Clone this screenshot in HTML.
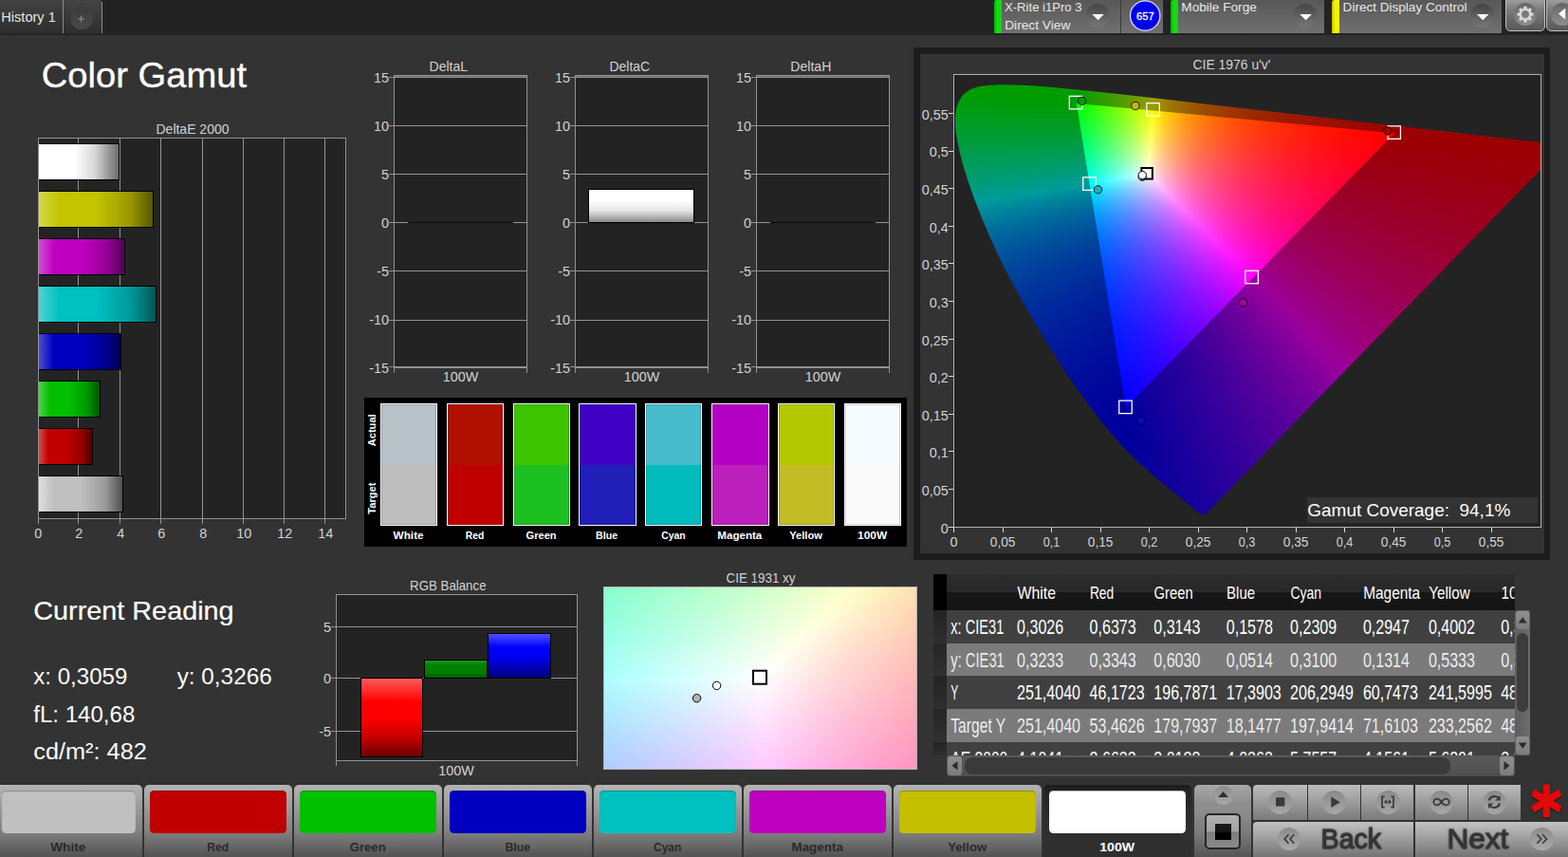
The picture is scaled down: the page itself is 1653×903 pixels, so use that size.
<!DOCTYPE html>
<html lang="en"><head><meta charset="utf-8"><title>Color Gamut</title>
<style>
html,body{margin:0;padding:0;background:#333333;}
#app{position:relative;width:1653px;height:903px;overflow:hidden;background:#333333;font-family:"Liberation Sans",sans-serif;}
#app div{position:absolute;}
#app .r2{height:2px;}
#app .r3{height:3px;left:0;width:100%;}
#app svg.ov{position:absolute;left:0;top:0;font-family:"Liberation Sans",sans-serif;}
</style></head>
<body><div id="app">
<div style="left:0px;top:0px;width:1653px;height:36.5px;background:#232323;"></div>
<div style="left:0px;top:0px;width:66px;height:35px;background:linear-gradient(#424242,#2d2d2d);"></div>
<div style="left:66px;top:0px;width:1px;height:35px;background:#8a8a8a;"></div>
<div style="left:67px;top:0px;width:40.5px;height:35px;background:linear-gradient(#444,#2e2e2e);border-top-right-radius:4px;"></div>
<div style="left:107.2px;top:2px;width:1px;height:33px;background:#8a8a8a;"></div>
<div style="left:73.5px;top:7.4px;width:24px;height:24px;background:linear-gradient(#3a3a3a,#4a4a4a);border-radius:50%;"></div>
<div style="left:1047.9px;top:0px;width:178.3px;height:35px;background:linear-gradient(#585858,#707070);border-top-left-radius:3px;"></div>
<div style="left:1047.9px;top:0px;width:8px;height:35px;background:linear-gradient(90deg,#0aa80a,#10e010 40%,#10d810);border-top-left-radius:3px;"></div>
<div style="left:1181px;top:0px;width:1.2px;height:35px;background:#3a3a3a;"></div>
<div style="left:1144.6px;top:4.2px;width:24.6px;height:24.6px;background:linear-gradient(#444,#787878);border-radius:50%;"></div>
<div style="left:1234px;top:0px;width:161.5px;height:35px;background:linear-gradient(#585858,#707070);border-top-left-radius:3px;"></div>
<div style="left:1234px;top:0px;width:8px;height:35px;background:linear-gradient(90deg,#0aa80a,#10e010 40%,#10d810);border-top-left-radius:3px;"></div>
<div style="left:1363.6px;top:4.2px;width:24.6px;height:24.6px;background:linear-gradient(#444,#787878);border-radius:50%;"></div>
<div style="left:1404px;top:0px;width:179px;height:35px;background:linear-gradient(#585858,#707070);border-top-left-radius:3px;"></div>
<div style="left:1404px;top:0px;width:7.5px;height:35px;background:linear-gradient(90deg,#b8b800,#f4f400 40%,#f0f000);border-top-left-radius:3px;"></div>
<div style="left:1550.2px;top:4.2px;width:24.6px;height:24.6px;background:linear-gradient(#444,#787878);border-radius:50%;"></div>
<div style="left:1587px;top:-4px;width:42px;height:37px;background:linear-gradient(#a6a6a6,#7a7a7a 40%,#585858);border:1px solid #c0c0c0;border-radius:5px;box-sizing:border-box;"></div>
<div style="left:1596px;top:3.4px;width:24px;height:24px;background:linear-gradient(#666,#8e8e8e);border-radius:50%;"></div>
<div style="left:1629.6px;top:-4px;width:42px;height:37px;background:linear-gradient(#a6a6a6,#7a7a7a 40%,#585858);border:1px solid #c0c0c0;border-radius:5px;box-sizing:border-box;"></div>
<div style="left:1634.6px;top:3.4px;width:24px;height:24px;background:linear-gradient(#666,#8e8e8e);border-radius:50%;"></div>
<div style="left:40px;top:145px;width:325px;height:402px;background:#232323;"></div>
<div style="left:82px;top:145px;width:1px;height:407px;background:#929292;"></div>
<div style="left:126px;top:145px;width:1px;height:407px;background:#929292;"></div>
<div style="left:169px;top:145px;width:1px;height:407px;background:#929292;"></div>
<div style="left:213px;top:145px;width:1px;height:407px;background:#929292;"></div>
<div style="left:256px;top:145px;width:1px;height:407px;background:#929292;"></div>
<div style="left:299px;top:145px;width:1px;height:407px;background:#929292;"></div>
<div style="left:342px;top:145px;width:1px;height:407px;background:#929292;"></div>
<div style="left:40px;top:145px;width:325px;height:1px;background:#929292;"></div>
<div style="left:40px;top:546px;width:325px;height:1px;background:#929292;"></div>
<div style="left:40px;top:145px;width:1px;height:402px;background:#929292;"></div>
<div style="left:364px;top:145px;width:1px;height:402px;background:#929292;"></div>
<div style="left:40px;top:547px;width:1px;height:5px;background:#929292;"></div>
<div style="left:41px;top:151px;width:85.2px;height:39px;background:linear-gradient(90deg,#fff,#fff 45%,#d8d8d8 70%,#6c6c6c);border:1px solid #000;border-left:none;border-right-width:1.6px;box-sizing:border-box;"></div>
<div style="left:41px;top:201px;width:121.2px;height:39px;background:linear-gradient(90deg,#d6d64c,#c4c400 18%,#c4c400 50%,#999900 80%,#565600);border:1px solid #000;border-left:none;border-right-width:1.6px;box-sizing:border-box;"></div>
<div style="left:41px;top:251px;width:90.5px;height:39px;background:linear-gradient(90deg,#d34cd3,#c000c0 18%,#c000c0 50%,#960096 80%,#540054);border:1px solid #000;border-left:none;border-right-width:1.6px;box-sizing:border-box;"></div>
<div style="left:41px;top:301px;width:124.3px;height:39px;background:linear-gradient(90deg,#4cd3d3,#00c0c0 18%,#00c0c0 50%,#009696 80%,#005454);border:1px solid #000;border-left:none;border-right-width:1.6px;box-sizing:border-box;"></div>
<div style="left:41px;top:351px;width:87.3px;height:39px;background:linear-gradient(90deg,#4c4cd3,#0000c0 18%,#0000c0 50%,#000096 80%,#000054);border:1px solid #000;border-left:none;border-right-width:1.6px;box-sizing:border-box;"></div>
<div style="left:41px;top:401px;width:65.1px;height:39px;background:linear-gradient(90deg,#4cd34c,#00c000 18%,#00c000 50%,#009600 80%,#005400);border:1px solid #000;border-left:none;border-right-width:1.6px;box-sizing:border-box;"></div>
<div style="left:41px;top:451px;width:57.3px;height:39px;background:linear-gradient(90deg,#d34c4c,#c00000 18%,#c00000 50%,#960000 80%,#540000);border:1px solid #000;border-left:none;border-right-width:1.6px;box-sizing:border-box;"></div>
<div style="left:41px;top:501px;width:89.3px;height:39px;background:linear-gradient(90deg,#dedede,#c0c0c0 18%,#c0c0c0 50%,#999 80%,#505050);border:1px solid #000;border-left:none;border-right-width:1.6px;box-sizing:border-box;"></div>
<div style="left:415px;top:79px;width:141px;height:309px;background:#232323;"></div>
<div style="left:410px;top:81px;width:146px;height:1px;background:#929292;"></div>
<div style="left:410px;top:132px;width:146px;height:1px;background:#929292;"></div>
<div style="left:410px;top:183px;width:146px;height:1px;background:#929292;"></div>
<div style="left:410px;top:234px;width:146px;height:1px;background:#929292;"></div>
<div style="left:410px;top:285px;width:146px;height:1px;background:#929292;"></div>
<div style="left:410px;top:337px;width:146px;height:1px;background:#929292;"></div>
<div style="left:410px;top:386px;width:146px;height:1px;background:#929292;"></div>
<div style="left:415px;top:80px;width:141px;height:1px;background:#6e6e6e;"></div>
<div style="left:415px;top:79px;width:141px;height:1px;background:#929292;"></div>
<div style="left:415px;top:387px;width:141px;height:1px;background:#929292;"></div>
<div style="left:415px;top:79px;width:1px;height:309px;background:#929292;"></div>
<div style="left:555px;top:79px;width:1px;height:309px;background:#929292;"></div>
<div style="left:415px;top:388px;width:1px;height:4.5px;background:#929292;"></div>
<div style="left:555px;top:388px;width:1px;height:4.5px;background:#929292;"></div>
<div style="left:429.5px;top:234px;width:111.5px;height:1px;background:#0c0c0c;"></div>
<div style="left:606px;top:79px;width:141px;height:309px;background:#232323;"></div>
<div style="left:601px;top:81px;width:146px;height:1px;background:#929292;"></div>
<div style="left:601px;top:132px;width:146px;height:1px;background:#929292;"></div>
<div style="left:601px;top:183px;width:146px;height:1px;background:#929292;"></div>
<div style="left:601px;top:234px;width:146px;height:1px;background:#929292;"></div>
<div style="left:601px;top:285px;width:146px;height:1px;background:#929292;"></div>
<div style="left:601px;top:337px;width:146px;height:1px;background:#929292;"></div>
<div style="left:601px;top:386px;width:146px;height:1px;background:#929292;"></div>
<div style="left:606px;top:80px;width:141px;height:1px;background:#6e6e6e;"></div>
<div style="left:606px;top:79px;width:141px;height:1px;background:#929292;"></div>
<div style="left:606px;top:387px;width:141px;height:1px;background:#929292;"></div>
<div style="left:606px;top:79px;width:1px;height:309px;background:#929292;"></div>
<div style="left:746px;top:79px;width:1px;height:309px;background:#929292;"></div>
<div style="left:606px;top:388px;width:1px;height:4.5px;background:#929292;"></div>
<div style="left:746px;top:388px;width:1px;height:4.5px;background:#929292;"></div>
<div style="left:620.3px;top:199.3px;width:112px;height:35.5px;background:linear-gradient(#fff,#fff 35%,#e4e4e4 65%,#8a8a8a);border:1px solid #000;box-sizing:border-box;box-shadow:0 0 0.6px #000;"></div>
<div style="left:797px;top:79px;width:141px;height:309px;background:#232323;"></div>
<div style="left:792px;top:81px;width:146px;height:1px;background:#929292;"></div>
<div style="left:792px;top:132px;width:146px;height:1px;background:#929292;"></div>
<div style="left:792px;top:183px;width:146px;height:1px;background:#929292;"></div>
<div style="left:792px;top:234px;width:146px;height:1px;background:#929292;"></div>
<div style="left:792px;top:285px;width:146px;height:1px;background:#929292;"></div>
<div style="left:792px;top:337px;width:146px;height:1px;background:#929292;"></div>
<div style="left:792px;top:386px;width:146px;height:1px;background:#929292;"></div>
<div style="left:797px;top:80px;width:141px;height:1px;background:#6e6e6e;"></div>
<div style="left:797px;top:79px;width:141px;height:1px;background:#929292;"></div>
<div style="left:797px;top:387px;width:141px;height:1px;background:#929292;"></div>
<div style="left:797px;top:79px;width:1px;height:309px;background:#929292;"></div>
<div style="left:937px;top:79px;width:1px;height:309px;background:#929292;"></div>
<div style="left:797px;top:388px;width:1px;height:4.5px;background:#929292;"></div>
<div style="left:937px;top:388px;width:1px;height:4.5px;background:#929292;"></div>
<div style="left:811.5px;top:234px;width:111.5px;height:1px;background:#0c0c0c;"></div>
<div style="left:384px;top:418.5px;width:572px;height:157px;background:#000;"></div>
<div style="left:401px;top:425px;width:60.2px;height:129px;background:linear-gradient(#b8c0c8,#b8c0c8 50.4%,#bebebe 50.4%,#bebebe);border:1px solid #fafafa;box-sizing:border-box;box-shadow:inset 0 0 0 1px rgba(0,0,0,.16);"></div>
<div style="left:471px;top:425px;width:60.2px;height:129px;background:linear-gradient(#b01000,#b01000 50.4%,#c00000 50.4%,#c00000);border:1px solid #fafafa;box-sizing:border-box;box-shadow:inset 0 0 0 1px rgba(0,0,0,.16);"></div>
<div style="left:541px;top:425px;width:60.2px;height:129px;background:linear-gradient(#3cc400,#3cc400 50.4%,#1cc020 50.4%,#1cc020);border:1px solid #fafafa;box-sizing:border-box;box-shadow:inset 0 0 0 1px rgba(0,0,0,.16);"></div>
<div style="left:610px;top:425px;width:61px;height:129px;background:linear-gradient(#4000c4,#4000c4 50.4%,#2020b8 50.4%,#2020b8);border:1px solid #fafafa;box-sizing:border-box;box-shadow:inset 0 0 0 1px rgba(0,0,0,.16);"></div>
<div style="left:680.3px;top:425px;width:60.2px;height:129px;background:linear-gradient(#48bccc,#48bccc 50.4%,#00bcbc 50.4%,#00bcbc);border:1px solid #fafafa;box-sizing:border-box;box-shadow:inset 0 0 0 1px rgba(0,0,0,.16);"></div>
<div style="left:750.2px;top:425px;width:61px;height:129px;background:linear-gradient(#b400c4,#b400c4 50.4%,#bc20bc 50.4%,#bc20bc);border:1px solid #fafafa;box-sizing:border-box;box-shadow:inset 0 0 0 1px rgba(0,0,0,.16);"></div>
<div style="left:820px;top:425px;width:60.2px;height:129px;background:linear-gradient(#b4c800,#b4c800 50.4%,#c4bc24 50.4%,#c4bc24);border:1px solid #fafafa;box-sizing:border-box;box-shadow:inset 0 0 0 1px rgba(0,0,0,.16);"></div>
<div style="left:890px;top:425px;width:60.2px;height:129px;background:linear-gradient(#f4fcff,#f4fcff 50.4%,#fafafa 50.4%,#fafafa);border:1px solid #fafafa;box-sizing:border-box;box-shadow:inset 0 0 0 1px rgba(0,0,0,.16);"></div>
<div style="left:354px;top:626px;width:255px;height:176px;background:#232323;"></div>
<div style="left:349px;top:660px;width:260px;height:1px;background:#929292;"></div>
<div style="left:349px;top:714px;width:260px;height:1px;background:#929292;"></div>
<div style="left:349px;top:770px;width:260px;height:1px;background:#929292;"></div>
<div style="left:354px;top:626px;width:255px;height:1px;background:#929292;"></div>
<div style="left:354px;top:801px;width:255px;height:1px;background:#929292;"></div>
<div style="left:354px;top:626px;width:1px;height:176px;background:#929292;"></div>
<div style="left:608px;top:626px;width:1px;height:176px;background:#929292;"></div>
<div style="left:354px;top:802px;width:1px;height:4.5px;background:#929292;"></div>
<div style="left:608px;top:802px;width:1px;height:4.5px;background:#929292;"></div>
<div style="left:379.5px;top:714px;width:66.8px;height:84px;background:linear-gradient(#ff5a5a,#ff0000 30%,#ff0000 50%,#c80000 75%,#6a0000);border:1px solid #000;box-sizing:border-box;"></div>
<div style="left:446.8px;top:695px;width:67.2px;height:20px;background:linear-gradient(#1a981c,#008200 28%,#007c00 70%,#005c00);border:1px solid #000;box-sizing:border-box;"></div>
<div style="left:513.5px;top:667px;width:67.3px;height:48px;background:linear-gradient(#5050ff,#0000ff 30%,#0000f0 55%,#000078);border:1px solid #000;box-sizing:border-box;"></div>
<div style="left:636px;top:618px;width:331px;height:193px;background:#fff;overflow:hidden;"><div class="r3" style="top:0px;background:linear-gradient(90deg,#86ffce 0px,#c1ffcc 136px,#ffffc9 264px,#ffe0af 331px)"></div><div class="r3" style="top:3px;background:linear-gradient(90deg,#87ffd0 0px,#c1ffcd 134px,#ffffcb 261px,#ffdfb0 331px)"></div><div class="r3" style="top:6px;background:linear-gradient(90deg,#88ffd1 0px,#c2ffcf 132px,#ffffcc 258px,#ffddb0 331px)"></div><div class="r3" style="top:9px;background:linear-gradient(90deg,#89ffd2 0px,#c2ffd0 130px,#ffffce 255px,#ffdcb0 331px)"></div><div class="r3" style="top:12px;background:linear-gradient(90deg,#8affd4 0px,#c3ffd2 128px,#ffffcf 252px,#ffdbb0 331px)"></div><div class="r3" style="top:15px;background:linear-gradient(90deg,#8bffd5 0px,#c3ffd3 127px,#ffffd1 248px,#ffd9b1 331px)"></div><div class="r3" style="top:18px;background:linear-gradient(90deg,#8cffd7 0px,#c4ffd5 126px,#ffffd3 245px,#ffd8b1 331px)"></div><div class="r3" style="top:21px;background:linear-gradient(90deg,#8dffd8 0px,#c5ffd6 124px,#ffffd4 242px,#ffd7b1 331px)"></div><div class="r3" style="top:24px;background:linear-gradient(90deg,#8effd9 0px,#c5ffd8 122px,#ffffd6 239px,#ffd5b2 331px)"></div><div class="r3" style="top:27px;background:linear-gradient(90deg,#8fffdb 0px,#c6ffd9 121px,#ffffd7 236px,#ffd4b2 331px)"></div><div class="r3" style="top:30px;background:linear-gradient(90deg,#90ffdc 0px,#c6ffdb 119px,#ffffd9 233px,#ffd3b2 331px)"></div><div class="r3" style="top:33px;background:linear-gradient(90deg,#91ffde 0px,#c7ffdc 117px,#ffffdb 230px,#ffd1b2 331px)"></div><div class="r3" style="top:36px;background:linear-gradient(90deg,#92ffdf 0px,#c7ffde 115px,#ffffdc 227px,#ffd0b3 331px)"></div><div class="r3" style="top:39px;background:linear-gradient(90deg,#94ffe1 0px,#c7ffe0 113px,#ffffde 224px,#ffcfb3 331px)"></div><div class="r3" style="top:42px;background:linear-gradient(90deg,#95ffe2 0px,#c9ffe1 113px,#ffffe0 220px,#ffcdb3 331px)"></div><div class="r3" style="top:45px;background:linear-gradient(90deg,#96ffe4 0px,#c9ffe3 111px,#ffffe1 217px,#ffe4c9 273px,#ffccb3 331px)"></div><div class="r3" style="top:48px;background:linear-gradient(90deg,#97ffe5 0px,#c9ffe4 109px,#ffffe3 214px,#ffe3ca 271px,#ffcbb4 331px)"></div><div class="r3" style="top:51px;background:linear-gradient(90deg,#98ffe7 0px,#caffe6 108px,#ffffe5 211px,#ffe3cb 269px,#ffcab4 331px)"></div><div class="r3" style="top:54px;background:linear-gradient(90deg,#99ffe8 0px,#cbffe8 106px,#ffffe7 208px,#ffe2cc 267px,#ffc8b4 331px)"></div><div class="r3" style="top:57px;background:linear-gradient(90deg,#9affea 0px,#ccffe9 105px,#ffffe8 205px,#ffe2cd 265px,#ffc7b4 331px)"></div><div class="r3" style="top:60px;background:linear-gradient(90deg,#9bffec 0px,#ccffeb 103px,#ffffea 202px,#ffe1ce 263px,#ffc6b5 331px)"></div><div class="r3" style="top:63px;background:linear-gradient(90deg,#9dffed 0px,#ccffed 100px,#ffffec 199px,#ffe0cf 262px,#ffc5b5 331px)"></div><div class="r3" style="top:66px;background:linear-gradient(90deg,#9effef 0px,#ffffed 196px,#ffe0d0 260px,#ffc3b5 331px)"></div><div class="r3" style="top:69px;background:linear-gradient(90deg,#9ffff0 0px,#ffffef 193px,#ffdfd1 258px,#ffc2b5 331px)"></div><div class="r3" style="top:72px;background:linear-gradient(90deg,#a0fff2 0px,#fffff1 189px,#ffded2 257px,#ffc1b6 331px)"></div><div class="r3" style="top:75px;background:linear-gradient(90deg,#a1fff4 0px,#fffff3 186px,#ffddd3 255px,#ffc0b6 331px)"></div><div class="r3" style="top:78px;background:linear-gradient(90deg,#a2fff5 0px,#fffff5 183px,#ffddd4 253px,#ffbeb6 331px)"></div><div class="r3" style="top:81px;background:linear-gradient(90deg,#a4fff7 0px,#fffff6 180px,#ffdcd5 251px,#ffbdb6 331px)"></div><div class="r3" style="top:84px;background:linear-gradient(90deg,#a5fff9 0px,#fffff8 177px,#ffdbd5 250px,#ffbcb7 331px)"></div><div class="r3" style="top:87px;background:linear-gradient(90deg,#a6fffa 0px,#fffffa 174px,#ffdbd6 248px,#ffbbb7 331px)"></div><div class="r3" style="top:90px;background:linear-gradient(90deg,#a7fffc 0px,#fffffc 171px,#ffdad7 246px,#ffb9b7 331px)"></div><div class="r3" style="top:93px;background:linear-gradient(90deg,#a9fffe 0px,#fffffe 168px,#ffdad9 244px,#ffb8b7 331px)"></div><div class="r3" style="top:96px;background:linear-gradient(90deg,#aaffff 0px,#fffeff 166px,#ffd9d9 243px,#ffb7b8 331px)"></div><div class="r3" style="top:99px;background:linear-gradient(90deg,#aafdff 0px,#fffcff 166px,#ffd7d9 243px,#ffb6b8 331px)"></div><div class="r3" style="top:102px;background:linear-gradient(90deg,#aafbff 0px,#fffbff 166px,#ffd5d9 244px,#ffb5b8 331px)"></div><div class="r3" style="top:105px;background:linear-gradient(90deg,#aaf9ff 0px,#fff9ff 167px,#ffd4d9 244px,#ffb3b8 331px)"></div><div class="r3" style="top:108px;background:linear-gradient(90deg,#aaf8ff 0px,#fff7ff 167px,#ffd2da 244px,#ffb2b9 331px)"></div><div class="r3" style="top:111px;background:linear-gradient(90deg,#aaf6ff 0px,#fff5ff 167px,#ffd1da 244px,#ffb1b9 331px)"></div><div class="r3" style="top:114px;background:linear-gradient(90deg,#aaf4ff 0px,#fff3ff 167px,#ffcfda 245px,#ffb0b9 331px)"></div><div class="r3" style="top:117px;background:linear-gradient(90deg,#aaf3ff 0px,#fff2ff 167px,#ffceda 245px,#ffafb9 331px)"></div><div class="r3" style="top:120px;background:linear-gradient(90deg,#aaf1ff 0px,#fff0ff 168px,#ffccda 245px,#ffadba 331px)"></div><div class="r3" style="top:123px;background:linear-gradient(90deg,#abefff 0px,#ffeeff 168px,#ffcbda 245px,#ffacba 331px)"></div><div class="r3" style="top:126px;background:linear-gradient(90deg,#abeeff 0px,#ffecff 168px,#ffcada 245px,#ffabba 331px)"></div><div class="r3" style="top:129px;background:linear-gradient(90deg,#abecff 0px,#ffeaff 168px,#ffc8da 246px,#ffaaba 331px)"></div><div class="r3" style="top:132px;background:linear-gradient(90deg,#abeaff 0px,#ffe9ff 169px,#ffc7db 245px,#ffa9ba 331px)"></div><div class="r3" style="top:135px;background:linear-gradient(90deg,#abe9ff 0px,#ffe7ff 169px,#ffc5db 245px,#ffa8bb 331px)"></div><div class="r3" style="top:138px;background:linear-gradient(90deg,#abe7ff 0px,#ffe5ff 169px,#ffc4db 246px,#ffa6bb 331px)"></div><div class="r3" style="top:141px;background:linear-gradient(90deg,#abe6ff 0px,#ffe4ff 169px,#ffc2db 246px,#ffa5bb 331px)"></div><div class="r3" style="top:144px;background:linear-gradient(90deg,#abe4ff 0px,#ffe2ff 170px,#ffc1db 246px,#ffa4bb 331px)"></div><div class="r3" style="top:147px;background:linear-gradient(90deg,#abe2ff 0px,#ffe0ff 170px,#ffc0db 246px,#ffa3bc 331px)"></div><div class="r3" style="top:150px;background:linear-gradient(90deg,#ace1ff 0px,#ffdeff 170px,#ffbedb 246px,#ffa2bc 331px)"></div><div class="r3" style="top:153px;background:linear-gradient(90deg,#acdfff 0px,#ffddff 170px,#ffbddb 247px,#ffa1bc 331px)"></div><div class="r3" style="top:156px;background:linear-gradient(90deg,#acdeff 0px,#ffdbff 171px,#ffbcdc 246px,#ffa0bc 331px)"></div><div class="r3" style="top:159px;background:linear-gradient(90deg,#acdcff 0px,#ffd9ff 171px,#ffbadc 246px,#ff9fbc 331px)"></div><div class="r3" style="top:162px;background:linear-gradient(90deg,#acdbff 0px,#ffd8ff 171px,#ffb9dc 247px,#ff9dbd 331px)"></div><div class="r3" style="top:165px;background:linear-gradient(90deg,#acd9ff 0px,#ffd6ff 171px,#ffb7dc 247px,#ff9cbd 331px)"></div><div class="r3" style="top:168px;background:linear-gradient(90deg,#acd8ff 0px,#ffd4ff 172px,#ffb6dc 247px,#ff9bbd 331px)"></div><div class="r3" style="top:171px;background:linear-gradient(90deg,#acd6ff 0px,#ffd3ff 172px,#ffb5dc 247px,#ff9abd 331px)"></div><div class="r3" style="top:174px;background:linear-gradient(90deg,#acd5ff 0px,#ffd1ff 172px,#ffb4dc 247px,#ff99be 331px)"></div><div class="r3" style="top:177px;background:linear-gradient(90deg,#acd3ff 0px,#ffd0ff 172px,#ffb2dc 248px,#ff98be 331px)"></div><div class="r3" style="top:180px;background:linear-gradient(90deg,#add2ff 0px,#ffceff 173px,#ffb1dc 248px,#ff97be 331px)"></div><div class="r3" style="top:183px;background:linear-gradient(90deg,#add0ff 0px,#ffccff 173px,#ffafdd 248px,#ff96be 331px)"></div><div class="r3" style="top:186px;background:linear-gradient(90deg,#adcfff 0px,#ffcbff 173px,#ffaedd 248px,#ff95be 331px)"></div><div class="r3" style="top:189px;background:linear-gradient(90deg,#adcdff 0px,#ffc9ff 173px,#ffaddd 248px,#ff94bf 331px)"></div><div class="r3" style="top:192px;background:linear-gradient(90deg,#adccff 0px,#ffc8ff 174px,#ffacdd 248px,#ff92bf 331px)"></div></div>
<div style="left:963px;top:49.5px;width:671px;height:540px;background:#1c1c1c;"></div>
<div style="left:970px;top:56.5px;width:658px;height:526px;background:#333333;"></div>
<div style="left:1006px;top:79px;width:618px;height:476px;background:#232323;"></div>
<div style="left:1006px;top:79px;width:618px;height:476px;background:transparent;overflow:hidden;"><div style="left:0;top:0;width:622px;height:476px;clip-path:polygon(264.06px 463.06px,265.03px 462.8px,642.53px 74.7px,642.55px 74.03px,618.65px 71.14px,197.79px 22.81px,140.2px 16.44px,101.72px 12.67px,81.74px 11.19px,66.37px 10.47px,48.74px 10.32px,37.13px 10.78px,28.92px 11.68px,23.79px 12.75px,21.34px 13.49px,16.69px 15.45px,14.51px 16.69px,12.41px 18.16px,10.49px 19.83px,8.73px 21.72px,7.15px 23.8px,5.7px 26.15px,4.41px 28.76px,3.34px 31.53px,2.46px 34.62px,1.79px 37.93px,1.07px 45.31px,1.19px 53.78px,1.6px 58.53px,3.17px 69.23px,5.76px 81.61px,9.5px 95.74px,14.53px 111.84px,20.92px 129.88px,28.64px 149.65px,37.56px 170.77px,47.74px 192.93px,53.35px 204.3px,59.3px 215.78px,71.88px 238.71px,84.96px 261.26px,98.19px 283.19px,111.33px 304.02px,124.15px 323.23px,136.43px 340.61px,148.12px 356.22px,159.17px 370.13px,169.21px 382.05px,178.03px 391.84px,185.85px 399.9px,196.49px 410.08px,209.16px 421.32px,248.12px 453.86px,255.61px 459.8px,258.11px 461.61px,260.75px 463.13px,261.67px 463.38px,263.17px 463.45px);"><div class="r2" style="top:8px;left:43px;width:25px;background:linear-gradient(90deg,#009c00 0px,#009c00 25px)"></div><div class="r2" style="top:10px;left:23px;width:78px;background:linear-gradient(90deg,#009c00 0px,#009c00 78px)"></div><div class="r2" style="top:12px;left:17px;width:105px;background:linear-gradient(90deg,#009c00 0px,#009c00 105px)"></div><div class="r2" style="top:14px;left:13px;width:129px;background:linear-gradient(90deg,#009c00 0px,#009c00 113px,#179c00 129px)"></div><div class="r2" style="top:16px;left:11px;width:149px;background:linear-gradient(90deg,#009c00 0px,#009c00 115px,#349c00 149px)"></div><div class="r2" style="top:18px;left:8px;width:170px;background:linear-gradient(90deg,#009c00 0px,#009c00 119px,#289c00 145px,#549c00 170px)"></div><div class="r2" style="top:20px;left:7px;width:189px;background:linear-gradient(90deg,#009c02 0px,#009c00 120px,#379c00 155px,#789c00 189px)"></div><div class="r2" style="top:22px;left:5px;width:209px;background:linear-gradient(90deg,#009c05 0px,#009c00 49px,#009c00 123px,#419c00 163px,#6c9c00 185px,#9a9c00 206px,#9c9600 209px)"></div><div class="r2" style="top:24px;left:4px;width:227px;background:linear-gradient(90deg,#009c07 0px,#009c00 71px,#009c00 124px,#239c00 147px,#489c00 168px,#709c00 188px,#9b9c00 207px,#9c7500 227px)"></div><div class="r2" style="top:26px;left:3px;width:246px;background:linear-gradient(90deg,#009c09 0px,#009c00 94px,#009c00 125px,#209c00 146px,#489c00 169px,#709c00 189px,#9b9c00 208px,#9c7800 226px,#9c5d00 246px)"></div><div class="r2" style="top:28px;left:2px;width:264px;background:linear-gradient(90deg,#009c0b 0px,#009c00 127px,#259c00 150px,#4a9c00 171px,#709c00 190px,#9c9b00 209px,#9c8400 220px,#9c6e00 233px,#9c5b00 248px,#9c4b00 264px)"></div><div class="r2" style="top:30px;left:2px;width:282px;background:linear-gradient(90deg,#009c0d 0px,#009c01 127px,#239c00 149px,#489c00 170px,#6e9c00 189px,#9c9b00 209px,#9c7e00 223px,#9c6400 240px,#9c4f00 259px,#9c3d00 282px)"></div><div class="r2" style="top:32px;left:1px;width:300px;background:linear-gradient(90deg,#009c0f 0px,#009c04 128px,#219c01 149px,#489c00 171px,#719c00 191px,#9a9c00 209px,#9c7800 227px,#9c5c00 247px,#9c4500 271px,#9c3200 300px)"></div><div class="r2" style="top:34px;left:1px;width:317px;background:linear-gradient(90deg,#009c11 0px,#019c07 129px,#249c04 151px,#4a9c01 172px,#719c00 191px,#9b9c00 209px,#9c7400 229px,#9c5600 252px,#9c3d00 281px,#9c2900 317px)"></div><div class="r2" style="top:36px;left:0px;width:336px;background:linear-gradient(90deg,#009c14 0px,#009c0a 130px,#239c07 152px,#4a9c05 173px,#719c02 192px,#9b9c00 210px,#9c8400 221px,#9c7100 232px,#9c5000 259px,#9c3600 293px,#9c2100 336px)"></div><div class="r2" style="top:38px;left:0px;width:353px;background:linear-gradient(90deg,#009c16 0px,#009c0d 130px,#219c0a 151px,#489c08 172px,#719c05 192px,#9b9c03 210px,#9c8301 221px,#9c6d00 234px,#9c5b00 248px,#9c4b00 264px,#9c3000 303px,#9c1b00 353px)"></div><div class="r2" style="top:40px;left:0px;width:371px;background:linear-gradient(90deg,#009c18 0px,#019c0f 131px,#239c0d 152px,#479c0b 172px,#6f9c09 191px,#999c06 209px,#9c7f03 223px,#9c6a01 236px,#9c5700 251px,#9c4600 269px,#9c2a00 313px,#9c1500 371px)"></div><div class="r2" style="top:42px;left:0px;width:388px;background:linear-gradient(90deg,#009c1a 0px,#009c12 131px,#229c10 152px,#479c0f 172px,#6f9c0c 191px,#9a9c0a 209px,#9c7e07 223px,#9c6804 237px,#9c5302 254px,#9c4200 273px,#9c3300 296px,#9c2600 322px,#9c1000 388px)"></div><div class="r2" style="top:44px;left:0px;width:406px;background:linear-gradient(90deg,#009c1c 0px,#009c15 131px,#209c14 151px,#459c12 171px,#6b9c10 189px,#9c9a0e 210px,#9c7e0a 223px,#9c6506 239px,#9c5003 257px,#9c3e01 278px,#9c2e00 303px,#9c2100 332px,#9c0c00 406px)"></div><div class="r2" style="top:46px;left:0px;width:423px;background:linear-gradient(90deg,#009c1e 0px,#019c18 132px,#239c17 153px,#479c15 172px,#9c9a11 210px,#9c7c0d 224px,#9c6109 241px,#9c4c05 260px,#9c3a02 283px,#9c2a00 310px,#9c1d00 342px,#9c0900 423px)"></div><div class="r2" style="top:48px;left:0px;width:440px;background:linear-gradient(90deg,#009c21 0px,#009c1b 132px,#239c1a 153px,#499c19 173px,#729c17 192px,#9b9c16 209px,#9c7b10 224px,#9c610b 241px,#9c4a07 262px,#9c3704 286px,#9c2801 315px,#9c1a00 350px,#9c0500 440px)"></div><div class="r2" style="top:50px;left:0px;width:458px;background:linear-gradient(90deg,#009c23 0px,#009c1e 132px,#219c1d 152px,#479c1c 172px,#709c1b 191px,#9c9b19 209px,#9c7b13 224px,#9c5f0e 242px,#9c4809 264px,#9c3505 290px,#9c2502 321px,#9c1700 359px,#9c0200 458px)"></div><div class="r2" style="top:52px;left:0px;width:475px;background:linear-gradient(90deg,#009c25 0px,#019c21 133px,#249c21 154px,#499c20 173px,#6e9c1f 190px,#9c9b1d 209px,#9c7816 225px,#9c5c10 244px,#9c450b 267px,#9c3107 295px,#9c2103 329px,#9c1400 369px,#9c0000 475px)"></div><div class="r2" style="top:54px;left:0px;width:493px;background:linear-gradient(90deg,#009c28 0px,#009c25 133px,#229c24 153px,#479c23 172px,#6b9c23 189px,#9c9a21 209px,#9c7619 226px,#9c5912 246px,#9c420c 270px,#9c2e08 300px,#9c1d04 339px,#9c0f01 386px,#9c0100 462px,#9c0000 493px)"></div><div class="r2" style="top:56px;left:0px;width:510px;background:linear-gradient(90deg,#009c2a 0px,#009c28 133px,#209c27 152px,#449c27 171px,#699c26 188px,#9c9a25 209px,#9c751c 226px,#9c5714 247px,#9c3f0e 273px,#9c2b09 305px,#9c1904 348px,#9c0b01 402px,#9c0000 468px,#9c0000 510px)"></div><div class="r2" style="top:58px;left:0px;width:527px;background:linear-gradient(90deg,#009c2c 0px,#019c2b 134px,#239c2b 154px,#469c2b 172px,#709c2a 191px,#9b9c2a 208px,#9c9929 209px,#9c8423 218px,#9c731f 227px,#9c5516 249px,#9c3c10 276px,#9c280a 310px,#9c1605 358px,#9c0701 419px,#9c0000 467px,#9c0000 527px)"></div><div class="r2" style="top:60px;left:0px;width:545px;background:linear-gradient(90deg,#009c2f 0px,#009c2e 134px,#239c2e 154px,#489c2e 173px,#709c2e 191px,#9c9b2e 208px,#9c8628 217px,#9c7422 226px,#9c5419 249px,#9c3b11 277px,#9c260b 313px,#9c1306 366px,#9c0401 435px,#9c0000 465px,#9c0000 545px)"></div><div class="r2" style="top:62px;left:1px;width:561px;background:linear-gradient(90deg,#009c31 0px,#009c32 133px,#219c32 152px,#469c32 171px,#6e9c32 189px,#9c9b32 207px,#9c852b 216px,#9c7225 226px,#9c511b 250px,#9c3813 280px,#9c230c 317px,#9c1006 375px,#9c0101 452px,#9c0000 561px)"></div><div class="r2" style="top:64px;left:1px;width:579px;background:linear-gradient(90deg,#009c33 0px,#009c35 133px,#1f9c35 151px,#469c36 171px,#6c9c36 188px,#9c9a36 207px,#9c852f 216px,#9c7128 226px,#9c5f22 238px,#9c501d 251px,#9c3614 282px,#9c210d 321px,#9c0e07 381px,#9c0002 459px,#9c0000 579px)"></div><div class="r2" style="top:66px;left:1px;width:596px;background:linear-gradient(90deg,#009c36 0px,#009c38 134px,#229c39 153px,#469c3a 171px,#6a9c3a 187px,#9c9a3b 207px,#9c8433 216px,#9c6f2b 227px,#9c4e1f 252px,#9c3315 285px,#9c1f0e 326px,#9c0d08 383px,#9c0003 457px,#9c0000 596px)"></div><div class="r2" style="top:68px;left:1px;width:614px;background:linear-gradient(90deg,#009c38 0px,#009c3c 134px,#209c3d 152px,#469c3e 171px,#6f9c3f 189px,#9b9c40 206px,#9c993f 207px,#9c8136 217px,#9c6d2e 228px,#9c5c27 240px,#9c4c21 254px,#9c3217 287px,#9c1d0f 330px,#9c0d09 385px,#9c0004 456px,#9c0000 614px)"></div><div class="r2" style="top:70px;left:2px;width:620px;background:linear-gradient(90deg,#009c3b 0px,#009c3f 133px,#1f9c40 151px,#489c42 171px,#719c43 189px,#9b9c44 205px,#9c833a 215px,#9c6e32 226px,#9c5c2a 238px,#9c4c24 252px,#9c3119 286px,#9c1c10 329px,#9c0d0a 383px,#9c0005 453px,#9c0000 620px)"></div><div class="r2" style="top:72px;left:2px;width:620px;background:linear-gradient(90deg,#009c3d 0px,#009c43 134px,#239c44 153px,#489c46 171px,#6f9c47 188px,#9c9b49 205px,#9c823e 215px,#9c6e35 226px,#9c5c2d 238px,#9c4c26 252px,#9c311b 286px,#9c1c12 329px,#9c0c0b 383px,#9c0006 451px,#9c0000 620px)"></div><div class="r2" style="top:74px;left:3px;width:619px;background:linear-gradient(90deg,#009c40 0px,#009c47 133px,#229c48 152px,#479c4a 170px,#6d9c4b 186px,#9c9b4d 204px,#9c8242 214px,#9c6d38 225px,#9c5b30 237px,#9c4b29 251px,#9c301d 285px,#9c1c13 328px,#9c0c0c 381px,#9c0007 448px,#9c0000 619px)"></div><div class="r2" style="top:76px;left:3px;width:619px;background:linear-gradient(90deg,#009c42 0px,#009c4a 133px,#1e9c4c 150px,#459c4e 169px,#6a9c50 185px,#9c9a52 204px,#9c8146 214px,#9c6c3c 225px,#9c5b33 237px,#9c4a2c 251px,#9c301f 285px,#9c1b15 328px,#9c0c0e 380px,#9c0008 446px,#9c0000 619px)"></div><div class="r2" style="top:78px;left:3px;width:619px;background:linear-gradient(90deg,#009c45 0px,#009c4e 134px,#229c50 152px,#459c52 169px,#689c54 184px,#9c9956 204px,#9c814a 214px,#9c6c3f 225px,#9c5a36 237px,#9c4a2e 251px,#9c2f21 285px,#9c1b16 328px,#9c0c0f 379px,#9c0009 444px,#9c0001 619px)"></div><div class="r2" style="top:80px;left:4px;width:618px;background:linear-gradient(90deg,#009c47 0px,#009c52 133px,#219c54 151px,#459c56 168px,#709c59 186px,#9b9c5c 202px,#9c995b 203px,#9c824f 212px,#9c6d43 223px,#9c5939 236px,#9c4931 250px,#9c2f23 284px,#9c1a18 327px,#9c0c10 377px,#9c000a 441px,#9c0001 618px)"></div><div class="r2" style="top:82px;left:4px;width:618px;background:linear-gradient(90deg,#009c4a 0px,#009c56 133px,#1f9c58 150px,#479c5b 169px,#709c5e 186px,#9c9b61 202px,#9c8454 211px,#9c6e48 222px,#9c5c3e 234px,#9c4b34 248px,#9c2f25 282px,#9c1b1a 325px,#9c0c12 375px,#9c000b 439px,#9c0002 618px)"></div><div class="r2" style="top:84px;left:5px;width:617px;background:linear-gradient(90deg,#009c4d 0px,#009c5a 133px,#229c5c 151px,#479c5f 168px,#6e9c62 184px,#9c9b65 201px,#9c8358 210px,#9c6d4b 221px,#9c5b41 233px,#9c4a37 247px,#9c2f27 281px,#9c1a1b 324px,#9c0c13 374px,#9c000c 436px,#9c0003 617px)"></div><div class="r2" style="top:86px;left:5px;width:617px;background:linear-gradient(90deg,#009c4f 0px,#009c5e 133px,#229c61 151px,#479c64 168px,#6b9c67 183px,#9c9a6a 201px,#9c835c 210px,#9c6d4f 221px,#9c5a44 233px,#9c4a3a 247px,#9c2e29 281px,#9c1a1d 324px,#9c0b14 373px,#9c000d 434px,#9c0003 617px)"></div><div class="r2" style="top:88px;left:6px;width:616px;background:linear-gradient(90deg,#009c52 0px,#009c62 132px,#1e9c64 148px,#449c68 166px,#699c6b 181px,#9c9a6f 200px,#9c8260 209px,#9c6c53 220px,#9c5a47 232px,#9c493d 246px,#9c2e2b 280px,#9c191f 323px,#9c0b16 371px,#9c000f 431px,#9c0004 616px)"></div><div class="r2" style="top:90px;left:6px;width:616px;background:linear-gradient(90deg,#009c55 0px,#009c66 133px,#449c6d 166px,#6e9c71 183px,#9b9c75 199px,#9c9974 200px,#9c8265 209px,#9c6c56 220px,#9c594a 232px,#9c493f 246px,#9c2e2e 280px,#9c1920 323px,#9c0b17 370px,#9c0010 429px,#9c0004 616px)"></div><div class="r2" style="top:92px;left:7px;width:615px;background:linear-gradient(90deg,#009c58 0px,#009c6a 132px,#239c6e 150px,#499c72 167px,#719c76 183px,#9c9b7b 198px,#9c836a 207px,#9c6d5b 218px,#9c5a4e 230px,#9c4a43 243px,#9c2f31 276px,#9c1922 320px,#9c0b19 367px,#9c0011 426px,#9c0005 615px)"></div><div class="r2" style="top:94px;left:7px;width:615px;background:linear-gradient(90deg,#009c5a 0px,#009c6e 132px,#1e9c72 148px,#469c76 166px,#6e9c7b 182px,#9c9b80 198px,#9c836f 207px,#9c6c5f 218px,#9c5951 230px,#9c4a46 243px,#9c2e33 276px,#9c1924 320px,#9c0b1a 366px,#9c0012 424px,#9c0006 615px)"></div><div class="r2" style="top:96px;left:8px;width:614px;background:linear-gradient(90deg,#009c5d 0px,#019c72 132px,#249c77 150px,#489c7b 166px,#6c9c80 180px,#9c9a85 197px,#9c8273 206px,#9c6c63 217px,#9c5955 229px,#9c4949 242px,#9c2e35 275px,#9c1925 319px,#9c0b1c 364px,#9c0013 421px,#9c0006 614px)"></div><div class="r2" style="top:98px;left:9px;width:613px;background:linear-gradient(90deg,#009c60 0px,#009c6a 72px,#009c77 131px,#229c7b 148px,#469c80 164px,#699c85 178px,#9c9a8a 196px,#9c8278 205px,#9c6b66 216px,#9c5858 228px,#9c484c 241px,#9c2d37 274px,#9c1827 318px,#9c0b1d 363px,#9c0015 418px,#9c0007 613px)"></div><div class="r2" style="top:100px;left:9px;width:611px;background:linear-gradient(90deg,#009c63 0px,#009c6e 72px,#009c7b 131px,#1d9c7f 146px,#439c85 163px,#6f9c8b 180px,#9b9c91 195px,#9c998f 196px,#9c817c 205px,#9c6a6a 216px,#9c585b 228px,#9c484f 241px,#9c2d39 274px,#9c1829 318px,#9c0b1e 362px,#9c0016 416px,#9c0008 611px)"></div><div class="r2" style="top:102px;left:10px;width:608px;background:linear-gradient(90deg,#009c66 0px,#009c72 72px,#019c80 131px,#239c85 148px,#489c8a 164px,#6f9c90 179px,#9b9c97 194px,#9c8383 203px,#9c6b6f 214px,#9c5860 226px,#9c4853 239px,#9c2d3c 272px,#9c182b 315px,#9c0b20 359px,#9c0017 413px,#9c0008 608px)"></div><div class="r2" style="top:104px;left:10px;width:606px;background:linear-gradient(90deg,#009c69 0px,#009c75 72px,#009c84 131px,#439c8f 162px,#6a9c95 177px,#939c9b 191px,#9c989a 195px,#9c8085 204px,#9c6972 215px,#9c5662 227px,#9c4755 240px,#9c2c3e 273px,#9c172c 316px,#9c0a21 359px,#9c0019 412px,#9c0010 496px,#9c0009 606px)"></div><div class="r2" style="top:106px;left:11px;width:603px;background:linear-gradient(90deg,#009c6c 0px,#009c79 71px,#009c89 130px,#329c91 154px,#6f9c9b 178px,#9c919a 196px,#9c7a86 205px,#9c6573 216px,#9c5363 228px,#9c4456 241px,#9c2a3f 274px,#9c162d 317px,#9c0a23 359px,#9c001a 409px,#9c0011 493px,#9c000a 603px)"></div><div class="r2" style="top:108px;left:12px;width:600px;background:linear-gradient(90deg,#009c6f 0px,#009c7d 71px,#019c8e 130px,#269c94 148px,#4f9c9b 165px,#9c8b9a 197px,#9c7586 206px,#9c6174 217px,#9c5064 229px,#9c4056 243px,#9c283f 276px,#9c152e 319px,#9c001b 406px,#9c0012 490px,#9c000a 600px)"></div><div class="r2" style="top:110px;left:12px;width:598px;background:linear-gradient(90deg,#009c72 0px,#009c81 71px,#009c92 130px,#319c9b 153px,#9c859a 199px,#9c7187 208px,#9c5d74 219px,#9c3e57 245px,#9c2640 279px,#9c132f 322px,#9c001d 404px,#9c0013 488px,#9c000b 598px)"></div><div class="r2" style="top:112px;left:13px;width:595px;background:linear-gradient(90deg,#009c76 0px,#009c85 71px,#009c97 129px,#189b9c 141px,#9c7f9a 200px,#9c6a85 210px,#9c5874 221px,#9c3b57 247px,#9c2341 281px,#9c122f 324px,#9c001e 401px,#9c0014 485px,#9c000c 595px)"></div><div class="r2" style="top:114px;left:14px;width:592px;background:linear-gradient(90deg,#009c79 0px,#009c88 67px,#019b9c 129px,#458d9c 162px,#9c7a9a 201px,#9c6686 211px,#9c5474 222px,#9c3858 248px,#9c2242 282px,#9c1130 325px,#9c001f 398px,#9c0015 482px,#9c000d 592px)"></div><div class="r2" style="top:116px;left:14px;width:590px;background:linear-gradient(90deg,#009c7c 0px,#009c8a 62px,#009c9c 115px,#00969c 129px,#45889c 163px,#9c759a 203px,#9c6286 213px,#9c5175 224px,#9c3659 250px,#9c2043 284px,#9c0f31 328px,#9c0021 396px,#9c0016 480px,#9c000d 590px)"></div><div class="r2" style="top:118px;left:15px;width:587px;background:linear-gradient(90deg,#009c7f 0px,#009c8c 55px,#009c9c 102px,#00929c 128px,#41849c 161px,#9c709a 204px,#9c5e87 214px,#9c4e76 225px,#9c3359 252px,#9c1e43 286px,#9c0e31 330px,#9c0022 393px,#9c0017 477px,#9c000e 587px)"></div><div class="r2" style="top:120px;left:16px;width:584px;background:linear-gradient(90deg,#009c83 0px,#009c9c 89px,#018d9c 128px,#447f9c 163px,#9c6b9a 205px,#9c5a87 215px,#9c4b76 226px,#9c315a 253px,#9c1d43 288px,#9c0d32 332px,#9c0024 390px,#9c0018 474px,#9c000f 584px)"></div><div class="r2" style="top:122px;left:16px;width:583px;background:linear-gradient(90deg,#009c86 0px,#009b9c 77px,#00899c 128px,#447a9c 164px,#9c679a 207px,#9c4978 227px,#9c325e 251px,#9c1f49 281px,#9c1138 318px,#9c0025 388px,#9c0019 472px,#9c0010 583px)"></div><div class="r2" style="top:124px;left:17px;width:580px;background:linear-gradient(90deg,#009c8a 0px,#009b9c 64px,#00859c 127px,#42779c 163px,#9c629a 208px,#9c477a 227px,#9c3160 251px,#9c1e4b 281px,#9c103a 318px,#9c0027 385px,#9c001a 469px,#9c0010 580px)"></div><div class="r2" style="top:126px;left:18px;width:577px;background:linear-gradient(90deg,#009c8d 0px,#009b9c 51px,#01819c 127px,#46729c 165px,#9c5e9a 209px,#9c437a 229px,#9c2e60 253px,#9c1c4b 283px,#9c0f3a 319px,#9c0029 382px,#9c001b 466px,#9c0011 577px)"></div><div class="r2" style="top:128px;left:19px;width:574px;background:linear-gradient(90deg,#009c91 0px,#009b9c 38px,#007d9c 126px,#466e9c 165px,#9c5a9a 210px,#9c407a 230px,#9c2c61 254px,#9c1b4c 284px,#9c0e3b 320px,#9c002a 379px,#9c001c 463px,#9c0012 574px)"></div><div class="r2" style="top:130px;left:19px;width:572px;background:linear-gradient(90deg,#009c94 0px,#009b9c 26px,#007a9c 126px,#446b9c 165px,#9c569a 212px,#9c3e7b 232px,#9c2a62 256px,#9c1a4d 286px,#9c0d3c 322px,#9c002c 377px,#9c001e 461px,#9c0013 572px)"></div><div class="r2" style="top:132px;left:20px;width:569px;background:linear-gradient(90deg,#009c98 0px,#009b9c 13px,#00769c 125px,#40689c 163px,#9c539b 213px,#9c3b7b 233px,#9c2862 257px,#9c194e 286px,#9c0c3d 322px,#9c002e 374px,#9c001f 457px,#9c0014 569px)"></div><div class="r2" style="top:134px;left:21px;width:566px;background:linear-gradient(90deg,#009b9c 0px,#00739c 125px,#47639c 167px,#9c4f9b 214px,#9c387c 234px,#9c2663 258px,#9c174f 287px,#9c0b3e 323px,#9c002f 371px,#9c0020 454px,#9c0014 566px)"></div><div class="r2" style="top:136px;left:22px;width:563px;background:linear-gradient(90deg,#00989c 0px,#00709c 124px,#45609c 166px,#9c4c9b 215px,#9c367c 235px,#9c2464 259px,#9c1650 288px,#9c0a3f 324px,#9c0031 368px,#9c0026 420px,#9c0015 563px)"></div><div class="r2" style="top:138px;left:22px;width:561px;background:linear-gradient(90deg,#00949c 0px,#006d9c 124px,#415e9c 165px,#9c489b 217px,#9c347d 237px,#9c2364 261px,#9c1550 290px,#9c0940 325px,#9c0033 366px,#9c0027 420px,#9c0016 561px)"></div><div class="r2" style="top:140px;left:23px;width:558px;background:linear-gradient(90deg,#00919c 0px,#00699c 124px,#48599c 169px,#9c459b 218px,#9c317d 238px,#9c2165 262px,#9c1351 291px,#9c0841 326px,#9c0035 363px,#9c0028 420px,#9c0017 558px)"></div><div class="r2" style="top:142px;left:24px;width:555px;background:linear-gradient(90deg,#008d9c 0px,#00679c 123px,#46579c 168px,#9c429b 219px,#9c2f7e 239px,#9c1f66 263px,#9c1252 292px,#9c0742 327px,#9c0037 360px,#9c0029 420px,#9c0018 555px)"></div><div class="r2" style="top:144px;left:25px;width:552px;background:linear-gradient(90deg,#008a9c 0px,#00649c 122px,#43549c 166px,#9c3f9b 220px,#9c2d7e 240px,#9c1e66 264px,#9c1153 293px,#9c0743 327px,#9c0038 357px,#9c002a 419px,#9c0019 552px)"></div><div class="r2" style="top:146px;left:26px;width:549px;background:linear-gradient(90deg,#00879c 0px,#00619c 122px,#49509c 170px,#9c3c9b 221px,#9c2b7f 241px,#9c1c67 265px,#9c1053 294px,#9c0643 328px,#9c003a 355px,#9c002b 419px,#9c001a 549px)"></div><div class="r2" style="top:148px;left:26px;width:547px;background:linear-gradient(90deg,#00849c 0px,#005f9c 122px,#474e9c 170px,#9c3a9b 223px,#9c297f 243px,#9c1a68 267px,#9c0f55 295px,#9c0545 329px,#9c003c 353px,#9c002c 419px,#9c001a 547px)"></div><div class="r2" style="top:150px;left:27px;width:544px;background:linear-gradient(90deg,#00819c 0px,#005c9c 121px,#444c9c 168px,#9c379b 224px,#9c277f 244px,#9c1968 268px,#9c0e55 296px,#9c0445 330px,#9c003e 350px,#9c002d 418px,#9c001b 544px)"></div><div class="r2" style="top:152px;left:28px;width:541px;background:linear-gradient(90deg,#007e9c 0px,#005a9c 121px,#48499c 171px,#9c349b 225px,#9c2580 245px,#9c186a 268px,#9c0d57 296px,#9c0446 330px,#9c0040 347px,#9c002e 417px,#9c001c 541px)"></div><div class="r2" style="top:154px;left:29px;width:538px;background:linear-gradient(90deg,#007b9c 0px,#00579c 120px,#48469c 171px,#9c329b 226px,#9c2380 246px,#9c166a 269px,#9c0c57 297px,#9c0347 330px,#9c0042 344px,#9c002f 416px,#9c001d 538px)"></div><div class="r2" style="top:156px;left:30px;width:535px;background:linear-gradient(90deg,#00789c 0px,#00559c 119px,#45459c 169px,#9c2f9b 227px,#9c2181 247px,#9c156b 270px,#9c0b58 298px,#9c0248 331px,#9c003b 370px,#9c0030 416px,#9c001e 535px)"></div><div class="r2" style="top:158px;left:30px;width:533px;background:linear-gradient(90deg,#00769c 0px,#00539c 120px,#49419c 173px,#9c2d9b 229px,#9c1f81 249px,#9c146b 272px,#9c0a59 300px,#9c0149 332px,#9c003c 371px,#9c0031 416px,#9c001f 533px)"></div><div class="r2" style="top:160px;left:31px;width:531px;background:linear-gradient(90deg,#00739c 0px,#00519c 119px,#493f9c 173px,#9c2b9b 230px,#9c1d81 250px,#9c126c 273px,#9c0959 301px,#9c014a 333px,#9c0031 416px,#9c0020 531px)"></div><div class="r2" style="top:162px;left:32px;width:528px;background:linear-gradient(90deg,#00719c 0px,#004f9c 118px,#463e9c 171px,#9c299b 231px,#9c1c82 251px,#9c116c 274px,#9c085a 301px,#9c004b 333px,#9c0032 415px,#9c0021 528px)"></div><div class="r2" style="top:164px;left:33px;width:525px;background:linear-gradient(90deg,#006e9c 0px,#004d9c 118px,#4a3b9c 174px,#9c269b 232px,#9c1a82 252px,#9c106d 275px,#9c075b 302px,#9c004c 333px,#9c0033 414px,#9c0022 525px)"></div><div class="r2" style="top:166px;left:34px;width:522px;background:linear-gradient(90deg,#006c9c 0px,#004b9c 117px,#49399c 174px,#9c249b 233px,#9c1882 253px,#9c0e6d 276px,#9c065c 303px,#9c004d 334px,#9c0035 413px,#9c0023 522px)"></div><div class="r2" style="top:168px;left:35px;width:519px;background:linear-gradient(90deg,#006a9c 0px,#00499c 116px,#47389c 172px,#9c229b 234px,#9c1784 253px,#9c0d6f 276px,#9c055d 303px,#9c004e 334px,#9c0036 412px,#9c0024 519px)"></div><div class="r2" style="top:170px;left:36px;width:516px;background:linear-gradient(90deg,#00679c 0px,#00479c 116px,#4a359c 175px,#9c209b 235px,#9c1684 254px,#9c0c6f 277px,#9c0055 320px,#9c004f 334px,#9c0037 411px,#9c0025 516px)"></div><div class="r2" style="top:172px;left:36px;width:514px;background:linear-gradient(90deg,#00659c 0px,#00459c 116px,#4a339c 176px,#9c1e9b 237px,#9c1484 256px,#9c0b70 279px,#9c0057 318px,#9c0050 335px,#9c0038 411px,#9c0026 514px)"></div><div class="r2" style="top:174px;left:37px;width:511px;background:linear-gradient(90deg,#00639c 0px,#00449c 115px,#47329c 174px,#9c1d9b 238px,#9c1385 257px,#9c0a70 280px,#9c005a 316px,#9c0050 336px,#9c0038 411px,#9c0027 511px)"></div><div class="r2" style="top:176px;left:38px;width:508px;background:linear-gradient(90deg,#00619c 0px,#00429c 115px,#4b2f9c 177px,#9c1b9b 239px,#9c1185 258px,#9c0971 281px,#9c005c 313px,#9c0051 336px,#9c0039 410px,#9c0028 508px)"></div><div class="r2" style="top:178px;left:39px;width:505px;background:linear-gradient(90deg,#005f9c 0px,#00409c 114px,#4b2d9c 177px,#9c199b 240px,#9c1085 259px,#9c0872 281px,#9c005f 310px,#9c0052 336px,#9c003b 409px,#9c0029 505px)"></div><div class="r2" style="top:180px;left:40px;width:502px;background:linear-gradient(90deg,#005d9c 0px,#003f9c 113px,#482c9c 175px,#9c179b 241px,#9c0e85 260px,#9c0772 282px,#9c0062 307px,#9c0053 336px,#9c003c 408px,#9c002a 502px)"></div><div class="r2" style="top:182px;left:41px;width:499px;background:linear-gradient(90deg,#005b9c 0px,#003d9c 113px,#4a2a9c 177px,#9c169b 242px,#9c0d86 261px,#9c0673 283px,#9c0065 304px,#9c0054 336px,#9c003d 406px,#9c002b 499px)"></div><div class="r2" style="top:184px;left:42px;width:496px;background:linear-gradient(90deg,#00599c 0px,#003c9c 112px,#4a299c 177px,#9c149b 243px,#9c0c86 262px,#9c0574 283px,#9c0067 301px,#9c0055 336px,#9c003e 405px,#9c002c 496px)"></div><div class="r2" style="top:186px;left:43px;width:493px;background:linear-gradient(90deg,#00579c 0px,#003a9c 111px,#49289c 176px,#9c129b 244px,#9c0a86 263px,#9c0474 284px,#9c006a 298px,#9c0056 336px,#9c003f 404px,#9c002d 493px)"></div><div class="r2" style="top:188px;left:44px;width:490px;background:linear-gradient(90deg,#00559c 0px,#00399c 111px,#4b269c 178px,#9c119b 245px,#9c0986 264px,#9c0375 285px,#9c006e 295px,#9c0057 336px,#9c0040 403px,#9c002e 490px)"></div><div class="r2" style="top:190px;left:45px;width:487px;background:linear-gradient(90deg,#00539c 0px,#00379c 110px,#4b249c 178px,#9c0f9b 246px,#9c0888 264px,#9c0276 285px,#9c0058 336px,#9c0041 402px,#9c002f 487px)"></div><div class="r2" style="top:192px;left:46px;width:484px;background:linear-gradient(90deg,#00529c 0px,#00369c 109px,#49239c 177px,#9c0e9b 247px,#9c0788 265px,#9c0176 286px,#9c0059 336px,#9c0042 401px,#9c0031 484px)"></div><div class="r2" style="top:194px;left:47px;width:481px;background:linear-gradient(90deg,#00509c 0px,#00359c 109px,#4b219c 179px,#9c0c9b 248px,#9c0688 266px,#9c0076 287px,#9c005a 336px,#9c0043 400px,#9c0032 481px)"></div><div class="r2" style="top:196px;left:48px;width:479px;background:linear-gradient(90deg,#004e9c 0px,#00339c 108px,#4b209c 179px,#9c0b9b 249px,#9c0588 267px,#9c0077 288px,#9c005a 337px,#9c0044 399px,#9c0033 479px)"></div><div class="r2" style="top:198px;left:48px;width:477px;background:linear-gradient(90deg,#004d9c 0px,#00329c 108px,#4a1f9c 179px,#9c0a9b 251px,#9c0388 269px,#9c0078 289px,#9c005b 338px,#9c0045 399px,#9c0034 477px)"></div><div class="r2" style="top:200px;left:49px;width:474px;background:linear-gradient(90deg,#004b9c 0px,#00319c 108px,#4c1d9c 181px,#9c089b 252px,#9c0082 278px,#9c0078 290px,#9c005c 338px,#9c0046 398px,#9c0035 474px)"></div><div class="r2" style="top:202px;left:50px;width:471px;background:linear-gradient(90deg,#004a9c 0px,#00309c 107px,#4c1c9c 181px,#9c079b 253px,#9c0085 275px,#9c0079 291px,#9c005d 338px,#9c0048 397px,#9c0036 471px)"></div><div class="r2" style="top:204px;left:51px;width:468px;background:linear-gradient(90deg,#00489c 0px,#002f9c 106px,#4a1b9c 180px,#9c069b 254px,#9c0089 272px,#9c007a 291px,#9c005f 337px,#9c0049 395px,#9c0037 468px)"></div><div class="r2" style="top:206px;left:52px;width:465px;background:linear-gradient(90deg,#00479c 0px,#002d9c 106px,#4b199c 181px,#9c049b 255px,#9c008c 270px,#9c007a 292px,#9c0060 337px,#9c004a 394px,#9c0039 465px)"></div><div class="r2" style="top:208px;left:54px;width:461px;background:linear-gradient(90deg,#00459c 0px,#002c9c 104px,#4c189c 181px,#9c039b 255px,#9c0090 266px,#9c007b 291px,#9c0060 336px,#9c004b 392px,#9c003a 461px)"></div><div class="r2" style="top:210px;left:55px;width:458px;background:linear-gradient(90deg,#00439c 0px,#002b9c 103px,#4b179c 180px,#9c029b 256px,#9c007b 292px,#9c0061 336px,#9c004c 391px,#9c003b 458px)"></div><div class="r2" style="top:212px;left:56px;width:455px;background:linear-gradient(90deg,#00429c 0px,#002a9c 103px,#4c169c 181px,#9c019b 257px,#9c007c 292px,#9c0062 336px,#9c004e 389px,#9c003d 455px)"></div><div class="r2" style="top:214px;left:57px;width:452px;background:linear-gradient(90deg,#00419c 0px,#00299c 102px,#4c159c 181px,#9c009c 258px,#9c007d 293px,#9c0063 336px,#9c004f 388px,#9c003e 452px)"></div><div class="r2" style="top:216px;left:58px;width:449px;background:linear-gradient(90deg,#003f9c 0px,#00289c 101px,#4b149c 181px,#9c009c 259px,#9c007e 293px,#9c0065 335px,#9c0050 386px,#9c003f 449px)"></div><div class="r2" style="top:218px;left:59px;width:446px;background:linear-gradient(90deg,#003e9c 0px,#00279c 101px,#4c139c 182px,#91009c 250px,#9c009c 260px,#9c007e 294px,#9c0065 335px,#9c0051 385px,#9c0041 446px)"></div><div class="r2" style="top:220px;left:60px;width:443px;background:linear-gradient(90deg,#003c9c 0px,#00269c 100px,#4c129c 182px,#8d009c 247px,#9c009c 261px,#9c007e 295px,#9c0066 335px,#9c0052 384px,#9c0042 443px)"></div><div class="r2" style="top:222px;left:61px;width:440px;background:linear-gradient(90deg,#003b9c 0px,#00259c 99px,#42139c 172px,#89009c 244px,#9c009c 262px,#9c007f 295px,#9c0067 335px,#9c0053 383px,#9c0043 440px)"></div><div class="r2" style="top:224px;left:62px;width:437px;background:linear-gradient(90deg,#003a9c 0px,#00249c 99px,#42129c 172px,#86009c 242px,#9c009c 263px,#9c007f 296px,#9c0068 335px,#9c0055 381px,#9c0045 437px)"></div><div class="r2" style="top:226px;left:63px;width:434px;background:linear-gradient(90deg,#00399c 0px,#00239c 98px,#40129c 170px,#82009c 239px,#9c009c 264px,#9c0080 296px,#9c0069 334px,#9c0056 380px,#9c0046 434px)"></div><div class="r2" style="top:228px;left:64px;width:431px;background:linear-gradient(90deg,#00379c 0px,#00229c 97px,#3e129c 167px,#7f009c 236px,#9c009c 265px,#9c0081 297px,#9c006a 334px,#9c0058 378px,#9c0047 431px)"></div><div class="r2" style="top:230px;left:65px;width:428px;background:linear-gradient(90deg,#00369c 0px,#00219c 97px,#3d119c 166px,#7b009c 233px,#9b009c 266px,#9c0081 297px,#9c006b 334px,#9c0059 377px,#9c0049 428px)"></div><div class="r2" style="top:232px;left:66px;width:426px;background:linear-gradient(90deg,#00359c 0px,#00209c 96px,#78009c 230px,#9b009c 267px,#9c0082 298px,#9c006c 334px,#9c005a 376px,#9c004a 426px)"></div><div class="r2" style="top:234px;left:68px;width:422px;background:linear-gradient(90deg,#00349c 0px,#00209c 94px,#74009c 226px,#9b009c 267px,#9c0083 297px,#9c006d 332px,#9c005b 373px,#9c004c 422px)"></div><div class="r2" style="top:236px;left:69px;width:419px;background:linear-gradient(90deg,#00339c 0px,#001f9c 94px,#71009c 223px,#9b009c 268px,#9c0083 298px,#9c006e 332px,#9c005c 372px,#9c004d 419px)"></div><div class="r2" style="top:238px;left:70px;width:416px;background:linear-gradient(90deg,#00319c 0px,#001e9c 93px,#6e009c 220px,#9b009c 269px,#9c0084 298px,#9c006f 332px,#9c005e 371px,#9c004f 416px)"></div><div class="r2" style="top:240px;left:71px;width:413px;background:linear-gradient(90deg,#00309c 0px,#001d9c 92px,#6a009c 217px,#9b009c 270px,#9c0084 299px,#9c0070 331px,#9c005f 369px,#9c0050 413px)"></div><div class="r2" style="top:242px;left:72px;width:410px;background:linear-gradient(90deg,#002f9c 0px,#001c9c 92px,#67009c 214px,#9b009c 271px,#9c0085 299px,#9c0071 331px,#9c0060 368px,#9c0052 410px)"></div><div class="r2" style="top:244px;left:73px;width:407px;background:linear-gradient(90deg,#002e9c 0px,#001b9c 91px,#64009c 211px,#9b009c 272px,#9c0086 299px,#9c0073 330px,#9c0062 366px,#9c0053 407px)"></div><div class="r2" style="top:246px;left:74px;width:404px;background:linear-gradient(90deg,#002d9c 0px,#001b9c 90px,#61009c 208px,#9b009c 273px,#9c0086 300px,#9c0073 330px,#9c0063 365px,#9c0055 404px)"></div><div class="r2" style="top:248px;left:75px;width:401px;background:linear-gradient(90deg,#002c9c 0px,#001a9c 90px,#5e009c 205px,#9b009c 274px,#9c0087 300px,#9c0075 329px,#9c0057 401px)"></div><div class="r2" style="top:250px;left:77px;width:397px;background:linear-gradient(90deg,#002b9c 0px,#00199c 88px,#5b009c 201px,#9b009c 274px,#9c0087 300px,#9c0076 328px,#9c0058 397px)"></div><div class="r2" style="top:252px;left:78px;width:394px;background:linear-gradient(90deg,#002a9c 0px,#00189c 87px,#59009c 198px,#9b009c 275px,#9c0088 300px,#9c0076 328px,#9c005a 394px)"></div><div class="r2" style="top:254px;left:79px;width:391px;background:linear-gradient(90deg,#00299c 0px,#01189c 87px,#56009c 195px,#9b009c 276px,#9c0088 301px,#9c0078 327px,#9c005c 391px)"></div><div class="r2" style="top:256px;left:80px;width:388px;background:linear-gradient(90deg,#00289c 0px,#00179c 86px,#53009c 192px,#9b009c 277px,#9c0079 327px,#9c005e 388px)"></div><div class="r2" style="top:258px;left:81px;width:385px;background:linear-gradient(90deg,#00279c 0px,#00169c 85px,#50009c 189px,#9b009c 278px,#9c007a 326px,#9c005f 385px)"></div><div class="r2" style="top:260px;left:82px;width:382px;background:linear-gradient(90deg,#00269c 0px,#01169c 85px,#4f009c 187px,#9b009c 279px,#9c007b 325px,#9c0061 382px)"></div><div class="r2" style="top:262px;left:84px;width:378px;background:linear-gradient(90deg,#00259c 0px,#00159c 83px,#4c009c 183px,#9b009c 279px,#9c007c 324px,#9c0063 378px)"></div><div class="r2" style="top:264px;left:85px;width:375px;background:linear-gradient(90deg,#00249c 0px,#00149c 82px,#4a009c 180px,#9b009c 280px,#9c007e 323px,#9c0065 375px)"></div><div class="r2" style="top:266px;left:86px;width:372px;background:linear-gradient(90deg,#00239c 0px,#01149c 82px,#47009c 177px,#9b009c 281px,#9c007e 323px,#9c0067 372px)"></div><div class="r2" style="top:268px;left:87px;width:369px;background:linear-gradient(90deg,#00229c 0px,#00139c 81px,#45009c 174px,#9b009c 282px,#9c0080 322px,#9c0069 369px)"></div><div class="r2" style="top:270px;left:88px;width:367px;background:linear-gradient(90deg,#00229c 0px,#00129c 80px,#42009c 171px,#9b009c 283px,#9c0081 322px,#9c006a 367px)"></div><div class="r2" style="top:272px;left:90px;width:363px;background:linear-gradient(90deg,#00219c 0px,#01129c 79px,#40009c 167px,#9b009c 283px,#9c0082 320px,#9c006c 363px)"></div><div class="r2" style="top:274px;left:91px;width:360px;background:linear-gradient(90deg,#00209c 0px,#00119c 78px,#3e009c 164px,#9b009c 284px,#9c0083 320px,#9c006e 360px)"></div><div class="r2" style="top:276px;left:92px;width:357px;background:linear-gradient(90deg,#001f9c 0px,#00119c 77px,#3c009c 161px,#9b009c 285px,#9c0084 319px,#9c0070 357px)"></div><div class="r2" style="top:278px;left:93px;width:354px;background:linear-gradient(90deg,#001e9c 0px,#00109c 76px,#39009c 158px,#9b009c 286px,#9c0085 318px,#9c0072 354px)"></div><div class="r2" style="top:280px;left:94px;width:351px;background:linear-gradient(90deg,#001d9c 0px,#000f9c 76px,#37009c 155px,#9b009c 287px,#9c0086 318px,#9c0074 351px)"></div><div class="r2" style="top:282px;left:96px;width:347px;background:linear-gradient(90deg,#001c9c 0px,#000f9c 74px,#35009c 151px,#9b009c 287px,#9c0088 316px,#9c0077 347px)"></div><div class="r2" style="top:284px;left:97px;width:344px;background:linear-gradient(90deg,#001c9c 0px,#000e9c 73px,#33009c 148px,#9b009c 288px,#9c0079 344px)"></div><div class="r2" style="top:286px;left:98px;width:341px;background:linear-gradient(90deg,#001b9c 0px,#000e9c 73px,#31009c 145px,#9b009c 289px,#9c007b 341px)"></div><div class="r2" style="top:288px;left:99px;width:338px;background:linear-gradient(90deg,#001a9c 0px,#000d9c 72px,#2f009c 142px,#9b009c 290px,#9c007d 338px)"></div><div class="r2" style="top:290px;left:101px;width:334px;background:linear-gradient(90deg,#00199c 0px,#000d9c 70px,#2d009c 138px,#9b009c 290px,#9c0080 334px)"></div><div class="r2" style="top:292px;left:102px;width:331px;background:linear-gradient(90deg,#00199c 0px,#000c9c 70px,#2b009c 135px,#9b009c 291px,#9c0082 331px)"></div><div class="r2" style="top:294px;left:103px;width:328px;background:linear-gradient(90deg,#00189c 0px,#000c9c 69px,#29009c 132px,#9b009c 292px,#9c0084 328px)"></div><div class="r2" style="top:296px;left:104px;width:325px;background:linear-gradient(90deg,#00179c 0px,#000b9c 68px,#28009c 129px,#9b009c 293px,#9c0087 325px)"></div><div class="r2" style="top:298px;left:106px;width:321px;background:linear-gradient(90deg,#00169c 0px,#000b9c 67px,#26009c 126px,#9b009c 293px,#9c0089 321px)"></div><div class="r2" style="top:300px;left:107px;width:318px;background:linear-gradient(90deg,#00169c 0px,#000a9c 66px,#25009c 123px,#9b009c 294px,#9c008c 318px)"></div><div class="r2" style="top:302px;left:108px;width:315px;background:linear-gradient(90deg,#00159c 0px,#000a9c 65px,#23009c 120px,#9b009c 295px,#9c008e 315px)"></div><div class="r2" style="top:304px;left:109px;width:312px;background:linear-gradient(90deg,#00149c 0px,#00099c 65px,#21009c 117px,#9b009c 296px,#9c0091 312px)"></div><div class="r2" style="top:306px;left:111px;width:309px;background:linear-gradient(90deg,#00139c 0px,#00099c 63px,#1f009c 113px,#5c009c 206px,#9b009c 296px,#9c0093 309px)"></div><div class="r2" style="top:308px;left:112px;width:306px;background:linear-gradient(90deg,#00139c 0px,#00089c 62px,#1e009c 110px,#5b009c 205px,#9b009c 297px,#9c0096 306px)"></div><div class="r2" style="top:310px;left:113px;width:303px;background:linear-gradient(90deg,#00129c 0px,#00089c 62px,#1c009c 107px,#5a009c 204px,#9b009c 298px,#9c0098 303px)"></div><div class="r2" style="top:312px;left:115px;width:299px;background:linear-gradient(90deg,#00119c 0px,#00079c 60px,#1a009c 103px,#58009c 199px,#9c009b 299px)"></div><div class="r2" style="top:314px;left:116px;width:296px;background:linear-gradient(90deg,#00119c 0px,#00079c 59px,#19009c 100px,#58009c 200px,#99009c 296px)"></div><div class="r2" style="top:316px;left:117px;width:293px;background:linear-gradient(90deg,#00109c 0px,#00069c 59px,#17009c 97px,#56009c 197px,#96009c 293px)"></div><div class="r2" style="top:318px;left:119px;width:289px;background:linear-gradient(90deg,#000f9c 0px,#00069c 57px,#16009c 93px,#54009c 193px,#94009c 289px)"></div><div class="r2" style="top:320px;left:120px;width:286px;background:linear-gradient(90deg,#000f9c 0px,#00069c 56px,#14009c 90px,#52009c 190px,#91009c 286px)"></div><div class="r2" style="top:322px;left:121px;width:283px;background:linear-gradient(90deg,#000e9c 0px,#00059c 56px,#13009c 87px,#50009c 187px,#8e009c 283px)"></div><div class="r2" style="top:324px;left:123px;width:279px;background:linear-gradient(90deg,#000d9c 0px,#00059c 54px,#11009c 83px,#4e009c 183px,#8c009c 279px)"></div><div class="r2" style="top:326px;left:124px;width:276px;background:linear-gradient(90deg,#000d9c 0px,#00049c 53px,#10009c 80px,#89009c 276px)"></div><div class="r2" style="top:328px;left:126px;width:272px;background:linear-gradient(90deg,#000c9c 0px,#00049c 52px,#0e009c 76px,#87009c 272px)"></div><div class="r2" style="top:330px;left:127px;width:269px;background:linear-gradient(90deg,#000c9c 0px,#00049c 51px,#0d009c 73px,#84009c 269px)"></div><div class="r2" style="top:332px;left:128px;width:266px;background:linear-gradient(90deg,#000b9c 0px,#00039c 50px,#0b009c 70px,#82009c 266px)"></div><div class="r2" style="top:334px;left:130px;width:262px;background:linear-gradient(90deg,#000a9c 0px,#00039c 49px,#0a009c 66px,#7f009c 262px)"></div><div class="r2" style="top:336px;left:131px;width:259px;background:linear-gradient(90deg,#000a9c 0px,#00029c 48px,#09009c 63px,#7d009c 259px)"></div><div class="r2" style="top:338px;left:133px;width:255px;background:linear-gradient(90deg,#00099c 0px,#00029c 46px,#3c009c 152px,#7b009c 255px)"></div><div class="r2" style="top:340px;left:134px;width:252px;background:linear-gradient(90deg,#00099c 0px,#00029c 46px,#78009c 252px)"></div><div class="r2" style="top:342px;left:136px;width:249px;background:linear-gradient(90deg,#00089c 0px,#00019c 44px,#77009c 249px)"></div><div class="r2" style="top:344px;left:137px;width:246px;background:linear-gradient(90deg,#00089c 0px,#00019c 43px,#74009c 246px)"></div><div class="r2" style="top:346px;left:139px;width:242px;background:linear-gradient(90deg,#00079c 0px,#00009c 42px,#72009c 242px)"></div><div class="r2" style="top:348px;left:140px;width:239px;background:linear-gradient(90deg,#00069c 0px,#00009c 41px,#70009c 239px)"></div><div class="r2" style="top:350px;left:142px;width:235px;background:linear-gradient(90deg,#00069c 0px,#00009c 39px,#6e009c 235px)"></div><div class="r2" style="top:352px;left:143px;width:232px;background:linear-gradient(90deg,#00059c 0px,#00009c 39px,#6c009c 232px)"></div><div class="r2" style="top:354px;left:145px;width:228px;background:linear-gradient(90deg,#00059c 0px,#00009c 37px,#6a009c 228px)"></div><div class="r2" style="top:356px;left:146px;width:225px;background:linear-gradient(90deg,#00049c 0px,#00009c 36px,#68009c 225px)"></div><div class="r2" style="top:358px;left:148px;width:221px;background:linear-gradient(90deg,#00049c 0px,#00009c 35px,#66009c 221px)"></div><div class="r2" style="top:360px;left:149px;width:218px;background:linear-gradient(90deg,#00039c 0px,#00009c 34px,#64009c 218px)"></div><div class="r2" style="top:362px;left:151px;width:214px;background:linear-gradient(90deg,#00039c 0px,#00009c 32px,#62009c 214px)"></div><div class="r2" style="top:364px;left:152px;width:211px;background:linear-gradient(90deg,#00029c 0px,#00009c 32px,#60009c 211px)"></div><div class="r2" style="top:366px;left:154px;width:207px;background:linear-gradient(90deg,#00029c 0px,#00009c 30px,#5e009c 207px)"></div><div class="r2" style="top:368px;left:156px;width:203px;background:linear-gradient(90deg,#00019c 0px,#00009c 28px,#5c009c 203px)"></div><div class="r2" style="top:370px;left:157px;width:200px;background:linear-gradient(90deg,#00019c 0px,#00009c 28px,#5a009c 200px)"></div><div class="r2" style="top:372px;left:159px;width:196px;background:linear-gradient(90deg,#00009c 0px,#00009c 26px,#58009c 196px)"></div><div class="r2" style="top:374px;left:161px;width:192px;background:linear-gradient(90deg,#00009c 0px,#00009c 24px,#57009c 192px)"></div><div class="r2" style="top:376px;left:162px;width:189px;background:linear-gradient(90deg,#00009c 0px,#00009c 24px,#55009c 189px)"></div><div class="r2" style="top:378px;left:164px;width:185px;background:linear-gradient(90deg,#00009c 0px,#00009c 22px,#53009c 185px)"></div><div class="r2" style="top:380px;left:166px;width:182px;background:linear-gradient(90deg,#00009c 0px,#00009c 20px,#52009c 182px)"></div><div class="r2" style="top:382px;left:167px;width:179px;background:linear-gradient(90deg,#00009c 0px,#00009c 20px,#50009c 179px)"></div><div class="r2" style="top:384px;left:169px;width:175px;background:linear-gradient(90deg,#00009c 0px,#00009c 18px,#4f009c 175px)"></div><div class="r2" style="top:386px;left:171px;width:171px;background:linear-gradient(90deg,#00009c 0px,#00009c 16px,#4d009c 171px)"></div><div class="r2" style="top:388px;left:173px;width:167px;background:linear-gradient(90deg,#00009c 0px,#00009c 15px,#4b009c 167px)"></div><div class="r2" style="top:390px;left:174px;width:164px;background:linear-gradient(90deg,#00009c 0px,#00009c 14px,#4a009c 164px)"></div><div class="r2" style="top:392px;left:176px;width:160px;background:linear-gradient(90deg,#00009c 0px,#00009c 12px,#48009c 160px)"></div><div class="r2" style="top:394px;left:178px;width:156px;background:linear-gradient(90deg,#00009c 0px,#00009c 10px,#46009c 156px)"></div><div class="r2" style="top:396px;left:180px;width:152px;background:linear-gradient(90deg,#00009c 0px,#00009c 9px,#45009c 152px)"></div><div class="r2" style="top:398px;left:182px;width:148px;background:linear-gradient(90deg,#00009c 0px,#00009c 7px,#43009c 148px)"></div><div class="r2" style="top:400px;left:184px;width:144px;background:linear-gradient(90deg,#00009c 0px,#01009c 7px,#42009c 144px)"></div><div class="r2" style="top:402px;left:186px;width:140px;background:linear-gradient(90deg,#00009c 0px,#40009c 140px)"></div><div class="r2" style="top:404px;left:188px;width:136px;background:linear-gradient(90deg,#00009c 0px,#3f009c 136px)"></div><div class="r2" style="top:406px;left:190px;width:132px;background:linear-gradient(90deg,#00009c 0px,#3d009c 132px)"></div><div class="r2" style="top:408px;left:192px;width:128px;background:linear-gradient(90deg,#01009c 0px,#3c009c 128px)"></div><div class="r2" style="top:410px;left:194px;width:124px;background:linear-gradient(90deg,#02009c 0px,#3b009c 124px)"></div><div class="r2" style="top:412px;left:197px;width:119px;background:linear-gradient(90deg,#03009c 0px,#39009c 119px)"></div><div class="r2" style="top:414px;left:199px;width:115px;background:linear-gradient(90deg,#03009c 0px,#38009c 115px)"></div><div class="r2" style="top:416px;left:201px;width:112px;background:linear-gradient(90deg,#04009c 0px,#37009c 112px)"></div><div class="r2" style="top:418px;left:203px;width:108px;background:linear-gradient(90deg,#05009c 0px,#35009c 108px)"></div><div class="r2" style="top:420px;left:206px;width:103px;background:linear-gradient(90deg,#06009c 0px,#34009c 103px)"></div><div class="r2" style="top:422px;left:208px;width:99px;background:linear-gradient(90deg,#07009c 0px,#33009c 99px)"></div><div class="r2" style="top:424px;left:210px;width:95px;background:linear-gradient(90deg,#07009c 0px,#31009c 95px)"></div><div class="r2" style="top:426px;left:213px;width:90px;background:linear-gradient(90deg,#08009c 0px,#30009c 90px)"></div><div class="r2" style="top:428px;left:215px;width:86px;background:linear-gradient(90deg,#09009c 0px,#2f009c 86px)"></div><div class="r2" style="top:430px;left:217px;width:82px;background:linear-gradient(90deg,#0a009c 0px,#2e009c 82px)"></div><div class="r2" style="top:432px;left:220px;width:77px;background:linear-gradient(90deg,#0b009c 0px,#2c009c 77px)"></div><div class="r2" style="top:434px;left:222px;width:73px;background:linear-gradient(90deg,#0c009c 0px,#2b009c 73px)"></div><div class="r2" style="top:436px;left:225px;width:68px;background:linear-gradient(90deg,#0d009c 0px,#2a009c 68px)"></div><div class="r2" style="top:438px;left:227px;width:64px;background:linear-gradient(90deg,#0d009c 0px,#29009c 64px)"></div><div class="r2" style="top:440px;left:229px;width:60px;background:linear-gradient(90deg,#0e009c 0px,#27009c 60px)"></div><div class="r2" style="top:442px;left:232px;width:55px;background:linear-gradient(90deg,#0f009c 0px,#26009c 55px)"></div><div class="r2" style="top:444px;left:234px;width:51px;background:linear-gradient(90deg,#10009c 0px,#25009c 51px)"></div><div class="r2" style="top:446px;left:237px;width:46px;background:linear-gradient(90deg,#11009c 0px,#24009c 46px)"></div><div class="r2" style="top:448px;left:239px;width:42px;background:linear-gradient(90deg,#11009c 0px,#23009c 42px)"></div><div class="r2" style="top:450px;left:241px;width:38px;background:linear-gradient(90deg,#12009c 0px,#22009c 38px)"></div><div class="r2" style="top:452px;left:244px;width:34px;background:linear-gradient(90deg,#13009c 0px,#21009c 34px)"></div><div class="r2" style="top:454px;left:246px;width:30px;background:linear-gradient(90deg,#13009c 0px,#20009c 30px)"></div><div class="r2" style="top:456px;left:249px;width:25px;background:linear-gradient(90deg,#14009c 0px,#1f009c 25px)"></div><div class="r2" style="top:458px;left:251px;width:21px;background:linear-gradient(90deg,#15009c 0px,#1e009c 21px)"></div><div class="r2" style="top:460px;left:254px;width:16px;background:linear-gradient(90deg,#16009c 0px,#1c009c 16px)"></div><div class="r2" style="top:462px;left:256px;width:12px;background:linear-gradient(90deg,#17009c 0px,#1b009c 12px)"></div></div><div style="left:0;top:0;width:618px;height:476px;clip-path:polygon(464.32px 61.36px,128.85px 30px,180.76px 350.44px);"><div class="r2" style="top:28px;left:127px;width:9px;background:linear-gradient(90deg,#00ff00 0px,#01ff00 2px,#12ff00 9px)"></div><div class="r2" style="top:30px;left:128px;width:29px;background:linear-gradient(90deg,#00ff02 0px,#14ff01 9px,#49ff00 29px)"></div><div class="r2" style="top:32px;left:128px;width:50px;background:linear-gradient(90deg,#00ff07 0px,#02ff07 2px,#35ff02 22px,#89ff00 50px)"></div><div class="r2" style="top:34px;left:128px;width:72px;background:linear-gradient(90deg,#00ff0c 0px,#01ff0b 2px,#15ff0a 10px,#5aff05 35px,#96ff00 54px,#d6ff00 72px)"></div><div class="r2" style="top:36px;left:128px;width:93px;background:linear-gradient(90deg,#00ff10 0px,#00ff10 2px,#1fff0e 14px,#6cff08 41px,#b2ff04 62px,#feff00 82px,#ffd800 93px)"></div><div class="r2" style="top:38px;left:129px;width:114px;background:linear-gradient(90deg,#00ff15 0px,#02ff14 2px,#26ff12 16px,#6fff0d 41px,#b6ff09 62px,#ffff04 81px,#ffcb00 96px,#ff9f00 114px)"></div><div class="r2" style="top:40px;left:129px;width:135px;background:linear-gradient(90deg,#00ff19 0px,#01ff19 2px,#20ff17 14px,#6cff13 40px,#b2ff0f 61px,#fffe0a 81px,#ffd606 92px,#ffb203 105px,#ff9400 119px,#ff7a00 135px)"></div><div class="r2" style="top:42px;left:129px;width:156px;background:linear-gradient(90deg,#00ff1e 0px,#00ff1e 2px,#1aff1d 12px,#68ff18 39px,#abff15 59px,#fffe10 81px,#ffcc0a 95px,#ffa105 112px,#ff7d01 132px,#ff5e00 156px)"></div><div class="r2" style="top:44px;left:130px;width:177px;background:linear-gradient(90deg,#00ff23 0px,#02ff23 2px,#24ff21 15px,#6bff1e 39px,#abff1b 58px,#fffd16 80px,#ffdb12 89px,#ffc00e 98px,#ff9108 119px,#ff6902 145px,#ff4900 177px)"></div><div class="r2" style="top:46px;left:130px;width:198px;background:linear-gradient(90deg,#00ff28 0px,#01ff28 2px,#23ff26 15px,#6eff23 40px,#b3ff20 60px,#feff1d 79px,#ffd717 90px,#ffba12 100px,#ff9e0e 112px,#ff850a 125px,#ff5b03 157px,#ff3800 198px)"></div><div class="r2" style="top:48px;left:130px;width:220px;background:linear-gradient(90deg,#00ff2d 0px,#00ff2d 2px,#1dff2c 13px,#6bff29 39px,#b3ff26 60px,#ffff23 79px,#ffd61c 90px,#ffb416 102px,#ff9511 116px,#ff790c 132px,#ff6208 150px,#ff4d04 170px,#ff2b00 220px)"></div><div class="r2" style="top:50px;left:131px;width:240px;background:linear-gradient(90deg,#00ff32 0px,#02ff32 2px,#25ff31 15px,#6eff2e 39px,#b3ff2c 59px,#ffff2a 78px,#ffd221 90px,#ffae1a 103px,#ff8c14 119px,#ff700e 137px,#ff5809 157px,#ff4305 181px,#ff2000 240px)"></div><div class="r2" style="top:52px;left:131px;width:261px;background:linear-gradient(90deg,#00ff37 0px,#01ff37 2px,#1fff36 13px,#6aff34 38px,#b0ff32 58px,#fffe30 78px,#ffd127 90px,#ffa81e 105px,#ff8616 122px,#ff6910 142px,#ff4f0b 165px,#ff3a06 192px,#ff2702 224px,#ff1700 261px)"></div><div class="r2" style="top:54px;left:131px;width:283px;background:linear-gradient(90deg,#00ff3c 0px,#00ff3c 2px,#18ff3c 11px,#66ff3a 37px,#a9ff39 56px,#fffd37 78px,#ffcd2b 91px,#ffa321 107px,#ff7f19 126px,#ff6012 148px,#ff470c 174px,#ff3107 205px,#ff1e02 241px,#ff0f00 283px)"></div><div class="r2" style="top:56px;left:131px;width:304px;background:linear-gradient(90deg,#00ff41 0px,#02ff41 3px,#15ff41 10px,#66ff40 37px,#a9ff3f 56px,#feff3e 77px,#fffc3d 78px,#ffc930 92px,#ff9e25 109px,#ff791c 129px,#ff5a14 153px,#ff400d 182px,#ff2a07 216px,#ff1803 256px,#ff0800 304px)"></div><div class="r2" style="top:58px;left:132px;width:325px;background:linear-gradient(90deg,#00ff47 0px,#01ff47 2px,#22ff46 14px,#6dff46 38px,#b4ff45 58px,#feff45 76px,#ffc836 91px,#ff9b29 109px,#ff741e 131px,#ff5415 157px,#ff3a0e 188px,#ff2408 226px,#ff1103 271px,#ff0200 325px)"></div><div class="r2" style="top:60px;left:132px;width:333px;background:linear-gradient(90deg,#00ff4c 0px,#00ff4c 2px,#1cff4c 12px,#6cff4c 38px,#b5ff4c 58px,#ffff4c 76px,#ffe343 83px,#ffc83b 91px,#ff982d 110px,#ff7122 132px,#ff5118 159px,#ff3710 191px,#ff210a 230px,#ff0f04 277px,#ff0000 333px)"></div><div class="r2" style="top:62px;left:132px;width:334px;background:linear-gradient(90deg,#00ff51 0px,#00ff51 2px,#15ff52 10px,#69ff52 37px,#adff52 56px,#fffe52 76px,#ffe249 83px,#ffc741 91px,#ff9731 110px,#ff7125 132px,#ff511b 159px,#ff3612 192px,#ff200c 231px,#ff0d05 281px,#ff0001 334px)"></div><div class="r2" style="top:64px;left:133px;width:331px;background:linear-gradient(90deg,#00ff57 0px,#01ff57 2px,#20ff57 13px,#6cff58 37px,#adff59 55px,#fffd59 75px,#ffe150 82px,#ffc646 90px,#ff9837 108px,#ff712a 130px,#ff511e 157px,#ff3615 190px,#ff200e 229px,#ff0d07 278px,#ff0003 331px)"></div><div class="r2" style="top:66px;left:133px;width:329px;background:linear-gradient(90deg,#00ff5c 0px,#00ff5d 2px,#1aff5d 11px,#68ff5e 36px,#aaff60 54px,#fdff61 74px,#fffc60 75px,#ffe056 82px,#ffc54c 90px,#ff973b 108px,#ff702d 130px,#ff5022 157px,#ff3618 189px,#ff2010 228px,#ff0d09 277px,#ff0004 329px)"></div><div class="r2" style="top:68px;left:133px;width:327px;background:linear-gradient(90deg,#00ff62 0px,#00ff62 2px,#13ff63 9px,#64ff65 35px,#a6ff66 53px,#feff68 74px,#fffb67 75px,#ffdf5c 82px,#ffc452 90px,#ff9640 108px,#ff7031 130px,#ff5025 156px,#ff361b 188px,#ff2012 227px,#ff0d0b 275px,#ff0006 327px)"></div><div class="r2" style="top:70px;left:134px;width:324px;background:linear-gradient(90deg,#00ff68 0px,#01ff68 2px,#21ff69 13px,#6fff6b 37px,#b6ff6e 56px,#ffff70 73px,#ffe264 80px,#ffc659 88px,#ff9746 106px,#ff7036 128px,#ff5129 154px,#ff361e 186px,#ff2015 224px,#ff0d0d 272px,#ff0008 324px)"></div><div class="r2" style="top:72px;left:134px;width:322px;background:linear-gradient(90deg,#00ff6e 0px,#00ff6e 2px,#1dff6f 12px,#6bff72 36px,#aeff74 54px,#fffe77 73px,#ffe16a 80px,#ffc55f 88px,#ff964a 106px,#ff713a 127px,#ff512c 153px,#ff3621 185px,#ff2017 223px,#ff0d0f 271px,#ff0009 322px)"></div><div class="r2" style="top:74px;left:134px;width:320px;background:linear-gradient(90deg,#00ff74 0px,#00ff74 2px,#14ff75 9px,#67ff78 35px,#aaff7b 53px,#fffd7e 73px,#ffe071 80px,#ffc464 88px,#ff9850 105px,#ff713f 126px,#ff5130 152px,#ff3724 183px,#ff201a 221px,#ff0d11 269px,#ff000b 320px)"></div><div class="r2" style="top:76px;left:135px;width:317px;background:linear-gradient(90deg,#00ff7a 0px,#02ff7a 2px,#1fff7b 12px,#6aff7f 35px,#aaff83 52px,#fffc86 72px,#ffdf78 79px,#ffc36a 87px,#ff9755 104px,#ff7143 125px,#ff5033 151px,#ff3627 182px,#ff201c 220px,#ff0d13 267px,#ff000d 317px)"></div><div class="r2" style="top:78px;left:135px;width:315px;background:linear-gradient(90deg,#00ff80 0px,#01ff80 2px,#18ff81 10px,#66ff86 34px,#a7ff8a 51px,#feff8f 71px,#fffc8d 72px,#ffde7e 79px,#ffc270 87px,#ff965a 104px,#ff7047 125px,#ff5037 150px,#ff362a 181px,#ff201f 218px,#ff0d15 265px,#ff000e 315px)"></div><div class="r2" style="top:80px;left:135px;width:313px;background:linear-gradient(90deg,#00ff86 0px,#00ff86 2px,#17ff88 10px,#6aff8d 35px,#b3ff92 54px,#ffff97 71px,#ffe187 78px,#ffc578 86px,#ff9760 103px,#ff704c 124px,#ff513b 149px,#ff362d 180px,#ff2021 217px,#ff0d18 263px,#ff0010 313px)"></div><div class="r2" style="top:82px;left:136px;width:310px;background:linear-gradient(90deg,#00ff8c 0px,#02ff8d 2px,#23ff8f 13px,#6dff94 35px,#b3ff99 53px,#ffff9f 70px,#ffe08e 77px,#ffc780 84px,#ff9866 101px,#ff7151 122px,#ff513f 147px,#ff3730 177px,#ff2024 214px,#ff0d1a 260px,#ff0012 310px)"></div><div class="r2" style="top:84px;left:136px;width:308px;background:linear-gradient(90deg,#00ff93 0px,#01ff93 2px,#1cff95 11px,#69ff9b 34px,#abffa1 51px,#fffea6 70px,#ffdf95 77px,#ffc686 84px,#ff976b 101px,#ff7055 122px,#ff5042 147px,#ff3633 177px,#ff2026 214px,#ff0d1c 259px,#ff0014 308px)"></div><div class="r2" style="top:86px;left:136px;width:306px;background:linear-gradient(90deg,#00ff99 0px,#00ff99 2px,#12ff9b 8px,#65ffa2 33px,#a7ffa8 50px,#fffdae 70px,#ffde9c 77px,#ffc58d 84px,#ff9671 101px,#ff715a 121px,#ff5046 146px,#ff3636 176px,#ff2029 212px,#ff0d1e 257px,#ff0016 306px)"></div><div class="r2" style="top:88px;left:137px;width:303px;background:linear-gradient(90deg,#00ffa0 0px,#02ffa0 2px,#1dffa3 11px,#68ffaa 33px,#a7ffb0 49px,#fdffb8 68px,#fffcb6 69px,#ffdda3 76px,#ffc493 83px,#ff9576 100px,#ff705e 120px,#ff514b 144px,#ff363a 174px,#ff202c 210px,#ff0d20 255px,#ff0018 303px)"></div><div class="r2" style="top:90px;left:137px;width:301px;background:linear-gradient(90deg,#00ffa6 0px,#01ffa7 2px,#1cffaa 11px,#6cffb2 34px,#b4ffb9 52px,#feffc1 68px,#ffc69c 82px,#ff977d 99px,#ff7163 119px,#ff514f 143px,#ff373e 172px,#ff202f 208px,#ff0d23 253px,#ff0019 301px)"></div><div class="r2" style="top:92px;left:137px;width:299px;background:linear-gradient(90deg,#00ffad 0px,#00ffae 2px,#15ffb0 9px,#68ffb9 33px,#b0ffc1 51px,#ffffc9 68px,#ffdfb4 75px,#ffc5a2 82px,#ff9883 98px,#ff7169 118px,#ff5153 142px,#ff3741 171px,#ff2032 207px,#ff0d25 251px,#ff001b 299px)"></div><div class="r2" style="top:94px;left:138px;width:296px;background:linear-gradient(90deg,#00ffb4 0px,#02ffb5 2px,#21ffb8 12px,#6bffc1 33px,#b1ffc9 50px,#fffed2 67px,#ffdebb 74px,#ffc4a9 81px,#ff9789 97px,#ff706d 117px,#ff5057 141px,#ff3644 170px,#ff2034 205px,#ff0d27 249px,#ff001d 296px)"></div><div class="r2" style="top:96px;left:138px;width:294px;background:linear-gradient(90deg,#00ffbb 0px,#01ffbc 2px,#1affbf 10px,#67ffc8 32px,#a8ffd1 48px,#fffdda 67px,#ffddc3 74px,#ffc3af 81px,#ff968e 97px,#ff6f72 117px,#ff515b 140px,#ff3647 169px,#ff2037 204px,#ff0d2a 247px,#ff001f 294px)"></div><div class="r2" style="top:98px;left:138px;width:292px;background:linear-gradient(90deg,#00ffc2 0px,#00ffc3 2px,#10ffc5 7px,#63ffd0 31px,#a4ffd8 47px,#fdffe4 66px,#fffce2 67px,#ffc6b9 80px,#ff9796 96px,#ff7279 115px,#ff5160 139px,#ff364b 168px,#ff203b 202px,#ff0d2c 245px,#ff0021 292px)"></div><div class="r2" style="top:100px;left:139px;width:289px;background:linear-gradient(90deg,#00ffc9 0px,#02ffca 2px,#1cffce 10px,#67ffd8 31px,#b1ffe3 49px,#feffee 65px,#fffbeb 66px,#ffc5c0 79px,#ff969b 95px,#ff717d 114px,#ff5063 138px,#ff364f 166px,#ff203d 200px,#ff0d2f 243px,#ff0024 289px)"></div><div class="r2" style="top:102px;left:139px;width:287px;background:linear-gradient(90deg,#00ffd0 0px,#01ffd1 2px,#1bffd5 10px,#6affe1 32px,#b2ffec 49px,#fffff7 65px,#ffe3e0 71px,#ffc7ca 78px,#ff98a3 94px,#ff7183 113px,#ff5169 136px,#ff3753 164px,#ff2041 198px,#ff0d31 241px,#ff0026 287px)"></div><div class="r2" style="top:104px;left:139px;width:285px;background:linear-gradient(90deg,#00ffd8 0px,#00ffd9 2px,#0dffdb 6px,#5effe8 29px,#a4fff3 46px,#f0ffff 62px,#fff9fc 66px,#ffdde4 72px,#ffc3ce 79px,#ff94a6 95px,#ff6f86 114px,#ff4f6c 137px,#ff3555 165px,#ff2043 198px,#ff0d34 240px,#ff0028 285px)"></div><div class="r2" style="top:106px;left:140px;width:283px;background:linear-gradient(90deg,#00ffe0 0px,#02ffe1 2px,#0fffe3 6px,#52ffee 25px,#b7ffff 49px,#fef2ff 66px,#ffeefc 67px,#ffbbcf 80px,#ff8fa8 96px,#ff6b88 115px,#ff4c6e 138px,#ff3357 166px,#ff1e45 199px,#ff0c35 241px,#ff002a 283px)"></div><div class="r2" style="top:108px;left:140px;width:281px;background:linear-gradient(90deg,#00ffe7 0px,#01ffe8 2px,#29ffef 14px,#82ffff 37px,#fee7ff 68px,#ffe4fc 69px,#ffb3d0 82px,#ff89aa 98px,#ff668a 117px,#ff4a70 139px,#ff325a 166px,#ff1d47 199px,#ff0c37 240px,#ff002c 281px)"></div><div class="r2" style="top:110px;left:140px;width:279px;background:linear-gradient(90deg,#00ffef 0px,#03fff1 3px,#51ffff 25px,#feddff 70px,#ffdafc 71px,#ffacd1 84px,#ff84ab 100px,#ff638c 119px,#ff4772 141px,#ff305d 167px,#ff1d4a 199px,#ff0b3a 239px,#ff002e 279px)"></div><div class="r2" style="top:112px;left:141px;width:276px;background:linear-gradient(90deg,#00fff7 0px,#02fff8 2px,#28feff 13px,#80edff 38px,#ffd1fc 72px,#ffa5d2 85px,#ff7fad 101px,#ff608f 119px,#ff4575 141px,#ff2f5f 167px,#ff1c4d 198px,#ff0b3c 237px,#ff0030 276px)"></div><div class="r2" style="top:114px;left:141px;width:274px;background:linear-gradient(90deg,#00ffff 0px,#01feff 2px,#4eeeff 25px,#ffc8fd 74px,#ff9ed3 87px,#ff7cb0 102px,#ff5e92 120px,#ff4377 142px,#ff2d61 168px,#ff1b4f 198px,#ff0b3e 237px,#ff0033 274px)"></div><div class="r2" style="top:116px;left:141px;width:272px;background:linear-gradient(90deg,#00f7ff 0px,#00f6ff 2px,#48e7ff 24px,#ffc0fd 76px,#ff98d4 89px,#ff77b1 104px,#ff5a93 122px,#ff427a 143px,#ff2d64 168px,#ff1b52 197px,#ff0b41 235px,#ff0035 272px)"></div><div class="r2" style="top:118px;left:142px;width:269px;background:linear-gradient(90deg,#00efff 0px,#02eeff 2px,#56ddff 28px,#ffb7fd 77px,#ff92d4 90px,#ff72b3 105px,#ff5695 123px,#ff3f7c 144px,#ff2b67 168px,#ff1a54 197px,#ff0a43 234px,#ff0038 269px)"></div><div class="r2" style="top:120px;left:142px;width:267px;background:linear-gradient(90deg,#00e8ff 0px,#01e7ff 2px,#53d6ff 28px,#ffb0fd 79px,#ff8cd5 92px,#ff6eb4 107px,#ff5396 125px,#ff3d7e 145px,#ff2a69 169px,#ff1957 197px,#ff003a 267px)"></div><div class="r2" style="top:122px;left:142px;width:265px;background:linear-gradient(90deg,#00e1ff 0px,#00e0ff 2px,#4dd0ff 27px,#ffa8fd 81px,#ff86d6 94px,#ff69b5 109px,#ff5199 126px,#ff3b81 146px,#ff286b 170px,#ff1859 197px,#ff003c 265px)"></div><div class="r2" style="top:124px;left:142px;width:263px;background:linear-gradient(90deg,#00dbff 0px,#02d9ff 3px,#47caff 26px,#ffa1fd 83px,#ff81d7 96px,#ff66b8 110px,#ff4e9c 127px,#ff3983 147px,#ff276e 170px,#ff185c 197px,#ff003f 263px)"></div><div class="r2" style="top:126px;left:143px;width:260px;background:linear-gradient(90deg,#00d4ff 0px,#01d3ff 2px,#57c0ff 31px,#ff9afd 84px,#ff7bd8 97px,#ff62b9 111px,#ff4b9d 128px,#ff3785 148px,#ff2671 170px,#ff175e 196px,#ff0042 260px)"></div><div class="r2" style="top:128px;left:143px;width:258px;background:linear-gradient(90deg,#00ceff 0px,#00cdff 2px,#51bbff 30px,#ff94fd 86px,#ff76d8 99px,#ff5eba 113px,#ff489f 130px,#ff3587 149px,#ff2573 171px,#ff1661 196px,#ff0044 258px)"></div><div class="r2" style="top:130px;left:143px;width:256px;background:linear-gradient(90deg,#00c9ff 0px,#02c7ff 3px,#4cb7ff 29px,#ff8efd 88px,#ff71d9 101px,#ff5abb 115px,#ff46a1 131px,#ff338a 150px,#ff2476 171px,#ff1664 196px,#ff0047 256px)"></div><div class="r2" style="top:132px;left:144px;width:253px;background:linear-gradient(90deg,#00c2ff 0px,#01c1ff 2px,#5aadff 34px,#ff88fd 89px,#ff6edc 101px,#ff58be 115px,#ff44a4 131px,#ff328c 150px,#ff1566 195px,#ff004a 253px)"></div><div class="r2" style="top:134px;left:144px;width:251px;background:linear-gradient(90deg,#00bdff 0px,#00bcff 2px,#55a9ff 33px,#ff82fd 91px,#ff6add 103px,#ff54bf 117px,#ff41a5 133px,#ff308e 151px,#ff1469 195px,#ff004c 251px)"></div><div class="r2" style="top:136px;left:144px;width:249px;background:linear-gradient(90deg,#00b8ff 0px,#02b6ff 3px,#50a5ff 32px,#ff7cfd 93px,#ff65dd 105px,#ff50c0 119px,#ff3fa8 134px,#ff2e91 152px,#ff146c 194px,#ff004f 249px)"></div><div class="r2" style="top:138px;left:145px;width:246px;background:linear-gradient(90deg,#00b3ff 0px,#01b2ff 2px,#5b9dff 36px,#ff77fe 94px,#ff61de 106px,#ff4ec3 119px,#ff3daa 134px,#ff2d93 152px,#ff136f 193px,#ff0052 246px)"></div><div class="r2" style="top:140px;left:145px;width:244px;background:linear-gradient(90deg,#00aeff 0px,#00adff 2px,#5899ff 36px,#ff72fe 96px,#ff5cde 108px,#ff4ac4 121px,#ff3aab 136px,#ff2b96 153px,#ff1372 193px,#ff0055 244px)"></div><div class="r2" style="top:142px;left:145px;width:242px;background:linear-gradient(90deg,#00aaff 0px,#02a8ff 3px,#5395ff 35px,#ff6cfe 98px,#ff58df 110px,#ff47c5 123px,#ff37ac 138px,#ff2998 154px,#ff1274 193px,#ff0058 242px)"></div><div class="r2" style="top:144px;left:146px;width:239px;background:linear-gradient(90deg,#00a5ff 0px,#01a4ff 2px,#5e8eff 39px,#ff68fe 99px,#ff56e2 110px,#ff45c7 123px,#ff35af 138px,#ff289a 154px,#ff1177 192px,#ff005b 239px)"></div><div class="r2" style="top:146px;left:146px;width:237px;background:linear-gradient(90deg,#00a0ff 0px,#009fff 2px,#5b8aff 39px,#ff63fe 101px,#ff52e2 112px,#ff41c8 125px,#ff269c 155px,#ff107a 192px,#ff005e 237px)"></div><div class="r2" style="top:148px;left:146px;width:235px;background:linear-gradient(90deg,#009cff 0px,#029bff 3px,#5687ff 38px,#ff5efe 103px,#ff4ee3 114px,#ff3fcb 126px,#ff25a0 155px,#ff107d 191px,#ff0061 235px)"></div><div class="r2" style="top:150px;left:147px;width:232px;background:linear-gradient(90deg,#0098ff 0px,#0197ff 2px,#6080ff 42px,#ff5afe 104px,#ff4ae3 115px,#ff3ccb 127px,#ff24a2 155px,#ff0f80 190px,#ff0065 232px)"></div><div class="r2" style="top:152px;left:147px;width:230px;background:linear-gradient(90deg,#0094ff 0px,#0093ff 2px,#5e7dff 42px,#ff56fe 106px,#ff39cc 129px,#ff22a4 156px,#ff0f83 189px,#ff0068 230px)"></div><div class="r2" style="top:154px;left:147px;width:228px;background:linear-gradient(90deg,#0090ff 0px,#028fff 3px,#597aff 41px,#ff52fe 108px,#ff37ce 130px,#ff21a7 157px,#ff0e86 189px,#ff006b 228px)"></div><div class="r2" style="top:156px;left:148px;width:225px;background:linear-gradient(90deg,#008cff 0px,#018bff 2px,#6374ff 45px,#ff4efe 109px,#ff34cf 131px,#ff1fa9 157px,#ff0e89 188px,#ff006f 225px)"></div><div class="r2" style="top:158px;left:148px;width:224px;background:linear-gradient(90deg,#0089ff 0px,#0188ff 2px,#6071ff 45px,#ff4afe 111px,#ff32d1 132px,#ff1dab 158px,#ff0d8c 188px,#ff0072 224px)"></div><div class="r2" style="top:160px;left:148px;width:222px;background:linear-gradient(90deg,#0086ff 0px,#0284ff 3px,#5c6eff 44px,#ff46fe 113px,#ff2fd2 134px,#ff1dae 158px,#ff0d90 187px,#ff0075 222px)"></div><div class="r2" style="top:162px;left:149px;width:219px;background:linear-gradient(90deg,#0082ff 0px,#0580ff 4px,#6569ff 48px,#ff42fe 114px,#ff2dd4 134px,#ff1bb0 158px,#ff0c92 186px,#ff0079 219px)"></div><div class="r2" style="top:164px;left:149px;width:217px;background:linear-gradient(90deg,#007fff 0px,#017eff 2px,#6266ff 48px,#ff3ffe 116px,#ff2bd5 136px,#ff1ab3 159px,#ff0b95 186px,#ff007c 217px)"></div><div class="r2" style="top:166px;left:149px;width:215px;background:linear-gradient(90deg,#007cff 0px,#027aff 3px,#5e64ff 47px,#ff3bfe 118px,#ff29d7 137px,#ff19b6 159px,#ff0b99 185px,#ff0080 215px)"></div><div class="r2" style="top:168px;left:150px;width:212px;background:linear-gradient(90deg,#0078ff 0px,#0975ff 6px,#675eff 51px,#ff38fe 119px,#ff26d8 138px,#ff17b8 159px,#ff0a9c 184px,#ff0084 212px)"></div><div class="r2" style="top:170px;left:150px;width:210px;background:linear-gradient(90deg,#0076ff 0px,#0175ff 2px,#625cff 50px,#ff35fe 121px,#ff24da 139px,#ff16bb 159px,#ff0aa0 183px,#ff0088 210px)"></div><div class="r2" style="top:172px;left:150px;width:208px;background:linear-gradient(90deg,#0073ff 0px,#0271ff 3px,#605aff 50px,#ff32fe 123px,#ff23dc 140px,#ff15be 160px,#ff09a4 182px,#ff008c 208px)"></div><div class="r2" style="top:174px;left:151px;width:205px;background:linear-gradient(90deg,#0070ff 0px,#0f6bff 9px,#6955ff 54px,#ff2ffe 124px,#ff21de 140px,#ff14c1 159px,#ff09a7 181px,#ff0090 205px)"></div><div class="r2" style="top:176px;left:151px;width:203px;background:linear-gradient(90deg,#006dff 0px,#026cff 3px,#6453ff 53px,#ff2cfe 126px,#ff1edf 142px,#ff13c3 160px,#ff08ab 180px,#ff0095 203px)"></div><div class="r2" style="top:178px;left:151px;width:201px;background:linear-gradient(90deg,#006aff 0px,#0269ff 3px,#6251ff 53px,#ff29fe 128px,#ff1de1 143px,#ff12c6 160px,#ff08af 179px,#ff0099 201px)"></div><div class="r2" style="top:180px;left:152px;width:198px;background:linear-gradient(90deg,#0068ff 0px,#1262ff 11px,#6a4cff 57px,#ff26fe 129px,#ff1ae1 144px,#ff10c8 160px,#ff009d 198px)"></div><div class="r2" style="top:182px;left:152px;width:196px;background:linear-gradient(90deg,#0065ff 0px,#0663ff 5px,#664aff 56px,#ff23ff 131px,#ff19e3 145px,#ff0fcc 160px,#ff00a2 196px)"></div><div class="r2" style="top:184px;left:152px;width:194px;background:linear-gradient(90deg,#0063ff 0px,#0062ff 2px,#6448ff 56px,#ff21ff 133px,#ff0ece 161px,#ff00a7 194px)"></div><div class="r2" style="top:186px;left:153px;width:191px;background:linear-gradient(90deg,#0060ff 0px,#6c44ff 60px,#ff1eff 134px,#ff0dd1 160px,#ff00ab 191px)"></div><div class="r2" style="top:188px;left:153px;width:189px;background:linear-gradient(90deg,#005eff 0px,#095bff 7px,#6842ff 59px,#ff1bff 136px,#ff0cd5 160px,#ff00b0 189px)"></div><div class="r2" style="top:190px;left:153px;width:187px;background:linear-gradient(90deg,#005cff 0px,#005bff 2px,#6641ff 59px,#ff19ff 138px,#ff0bd7 161px,#ff00b5 187px)"></div><div class="r2" style="top:192px;left:154px;width:184px;background:linear-gradient(90deg,#0059ff 0px,#6d3cff 63px,#ff17ff 139px,#ff0ada 160px,#ff00ba 184px)"></div><div class="r2" style="top:194px;left:154px;width:182px;background:linear-gradient(90deg,#0057ff 0px,#0e53ff 10px,#693bff 62px,#ff14ff 141px,#ff09dd 160px,#ff00c0 182px)"></div><div class="r2" style="top:196px;left:154px;width:180px;background:linear-gradient(90deg,#0055ff 0px,#0553ff 5px,#6839ff 62px,#ff12ff 143px,#ff08e1 160px,#ff00c5 180px)"></div><div class="r2" style="top:198px;left:154px;width:178px;background:linear-gradient(90deg,#0053ff 0px,#0152ff 3px,#6438ff 61px,#ff10ff 145px,#ff07e3 161px,#ff00cb 178px)"></div><div class="r2" style="top:200px;left:155px;width:175px;background:linear-gradient(90deg,#0051ff 0px,#114cff 12px,#6b34ff 65px,#ff0dff 146px,#ff00d0 175px)"></div><div class="r2" style="top:202px;left:155px;width:173px;background:linear-gradient(90deg,#004fff 0px,#074cff 6px,#6733ff 64px,#ff0bff 148px,#ff00d6 173px)"></div><div class="r2" style="top:204px;left:155px;width:171px;background:linear-gradient(90deg,#004dff 0px,#014cff 3px,#6632ff 64px,#ff09ff 150px,#ff00dc 171px)"></div><div class="r2" style="top:206px;left:156px;width:168px;background:linear-gradient(90deg,#004bff 0px,#1445ff 14px,#6c2eff 68px,#ff07ff 151px,#ff00e3 168px)"></div><div class="r2" style="top:208px;left:156px;width:166px;background:linear-gradient(90deg,#0049ff 0px,#0a46ff 8px,#692dff 67px,#fd06ff 152px,#ff00e9 166px)"></div><div class="r2" style="top:210px;left:156px;width:165px;background:linear-gradient(90deg,#0048ff 0px,#0146ff 3px,#672bff 67px,#fd04ff 154px,#ff00ee 165px)"></div><div class="r2" style="top:212px;left:157px;width:162px;background:linear-gradient(90deg,#0045ff 0px,#163fff 16px,#6d28ff 71px,#fd02ff 155px,#ff00f5 162px)"></div><div class="r2" style="top:214px;left:157px;width:160px;background:linear-gradient(90deg,#0044ff 0px,#0043ff 2px,#572cff 58px,#fd00ff 157px,#ff00fb 160px)"></div><div class="r2" style="top:216px;left:157px;width:158px;background:linear-gradient(90deg,#0042ff 0px,#0440ff 5px,#6726ff 69px,#fc00ff 158px)"></div><div class="r2" style="top:218px;left:158px;width:155px;background:linear-gradient(90deg,#0040ff 0px,#6a24ff 71px,#f500ff 155px)"></div><div class="r2" style="top:220px;left:158px;width:153px;background:linear-gradient(90deg,#003fff 0px,#083cff 7px,#6224ff 67px,#ee00ff 153px)"></div><div class="r2" style="top:222px;left:158px;width:151px;background:linear-gradient(90deg,#003dff 0px,#013cff 3px,#5c24ff 64px,#e700ff 151px)"></div><div class="r2" style="top:224px;left:159px;width:148px;background:linear-gradient(90deg,#003cff 0px,#5f21ff 66px,#e100ff 148px)"></div><div class="r2" style="top:226px;left:159px;width:146px;background:linear-gradient(90deg,#003aff 0px,#0239ff 3px,#5922ff 63px,#db00ff 146px)"></div><div class="r2" style="top:228px;left:159px;width:144px;background:linear-gradient(90deg,#0039ff 0px,#0138ff 3px,#5222ff 59px,#d500ff 144px)"></div><div class="r2" style="top:230px;left:160px;width:141px;background:linear-gradient(90deg,#0037ff 0px,#561fff 62px,#cf00ff 141px)"></div><div class="r2" style="top:232px;left:160px;width:139px;background:linear-gradient(90deg,#0036ff 0px,#4f20ff 58px,#c900ff 139px)"></div><div class="r2" style="top:234px;left:160px;width:137px;background:linear-gradient(90deg,#0034ff 0px,#0133ff 3px,#4a20ff 55px,#c300ff 137px)"></div><div class="r2" style="top:236px;left:161px;width:134px;background:linear-gradient(90deg,#0033ff 0px,#4e1dff 58px,#be00ff 134px)"></div><div class="r2" style="top:238px;left:161px;width:132px;background:linear-gradient(90deg,#0032ff 0px,#471eff 54px,#b800ff 132px)"></div><div class="r2" style="top:240px;left:161px;width:130px;background:linear-gradient(90deg,#0030ff 0px,#012fff 3px,#411eff 50px,#b300ff 130px)"></div><div class="r2" style="top:242px;left:162px;width:127px;background:linear-gradient(90deg,#002fff 0px,#451bff 53px,#ae00ff 127px)"></div><div class="r2" style="top:244px;left:162px;width:125px;background:linear-gradient(90deg,#002eff 0px,#3e1cff 49px,#a900ff 125px)"></div><div class="r2" style="top:246px;left:162px;width:123px;background:linear-gradient(90deg,#002cff 0px,#381cff 45px,#a400ff 123px)"></div><div class="r2" style="top:248px;left:163px;width:120px;background:linear-gradient(90deg,#002bff 0px,#3e1aff 49px,#9f00ff 120px)"></div><div class="r2" style="top:250px;left:163px;width:118px;background:linear-gradient(90deg,#002aff 0px,#361aff 44px,#9a00ff 118px)"></div><div class="r2" style="top:252px;left:163px;width:116px;background:linear-gradient(90deg,#0029ff 0px,#301bff 40px,#9500ff 116px)"></div><div class="r2" style="top:254px;left:164px;width:113px;background:linear-gradient(90deg,#0027ff 0px,#3618ff 44px,#9100ff 113px)"></div><div class="r2" style="top:256px;left:164px;width:111px;background:linear-gradient(90deg,#0026ff 0px,#2e19ff 39px,#8c00ff 111px)"></div><div class="r2" style="top:258px;left:164px;width:109px;background:linear-gradient(90deg,#0025ff 0px,#271aff 34px,#8800ff 109px)"></div><div class="r2" style="top:260px;left:165px;width:106px;background:linear-gradient(90deg,#0024ff 0px,#8400ff 106px)"></div><div class="r2" style="top:262px;left:165px;width:105px;background:linear-gradient(90deg,#0023ff 0px,#2817ff 35px,#8100ff 105px)"></div><div class="r2" style="top:264px;left:165px;width:103px;background:linear-gradient(90deg,#0022ff 0px,#2218ff 30px,#7d00ff 103px)"></div><div class="r2" style="top:266px;left:166px;width:100px;background:linear-gradient(90deg,#0021ff 0px,#7900ff 100px)"></div><div class="r2" style="top:268px;left:166px;width:98px;background:linear-gradient(90deg,#0020ff 0px,#7500ff 98px)"></div><div class="r2" style="top:270px;left:166px;width:96px;background:linear-gradient(90deg,#001fff 0px,#7100ff 96px)"></div><div class="r2" style="top:272px;left:166px;width:94px;background:linear-gradient(90deg,#001eff 0px,#1218ff 18px,#6d00ff 94px)"></div><div class="r2" style="top:274px;left:167px;width:91px;background:linear-gradient(90deg,#001dff 0px,#6900ff 91px)"></div><div class="r2" style="top:276px;left:167px;width:89px;background:linear-gradient(90deg,#001cff 0px,#6500ff 89px)"></div><div class="r2" style="top:278px;left:167px;width:87px;background:linear-gradient(90deg,#001bff 0px,#0a18ff 11px,#6200ff 87px)"></div><div class="r2" style="top:280px;left:168px;width:84px;background:linear-gradient(90deg,#001aff 0px,#5e00ff 84px)"></div><div class="r2" style="top:282px;left:168px;width:82px;background:linear-gradient(90deg,#0019ff 0px,#5b00ff 82px)"></div><div class="r2" style="top:284px;left:168px;width:80px;background:linear-gradient(90deg,#0018ff 0px,#5700ff 80px)"></div><div class="r2" style="top:286px;left:169px;width:77px;background:linear-gradient(90deg,#0017ff 0px,#5400ff 77px)"></div><div class="r2" style="top:288px;left:169px;width:75px;background:linear-gradient(90deg,#0016ff 0px,#5100ff 75px)"></div><div class="r2" style="top:290px;left:169px;width:73px;background:linear-gradient(90deg,#0016ff 0px,#4d00ff 73px)"></div><div class="r2" style="top:292px;left:170px;width:70px;background:linear-gradient(90deg,#0014ff 0px,#4a00ff 70px)"></div><div class="r2" style="top:294px;left:170px;width:68px;background:linear-gradient(90deg,#0014ff 0px,#4700ff 68px)"></div><div class="r2" style="top:296px;left:170px;width:66px;background:linear-gradient(90deg,#0013ff 0px,#4400ff 66px)"></div><div class="r2" style="top:298px;left:171px;width:63px;background:linear-gradient(90deg,#0012ff 0px,#4100ff 63px)"></div><div class="r2" style="top:300px;left:171px;width:61px;background:linear-gradient(90deg,#0011ff 0px,#3e00ff 61px)"></div><div class="r2" style="top:302px;left:171px;width:59px;background:linear-gradient(90deg,#0011ff 0px,#3b00ff 59px)"></div><div class="r2" style="top:304px;left:172px;width:56px;background:linear-gradient(90deg,#0010ff 0px,#3800ff 56px)"></div><div class="r2" style="top:306px;left:172px;width:54px;background:linear-gradient(90deg,#000fff 0px,#3500ff 54px)"></div><div class="r2" style="top:308px;left:172px;width:52px;background:linear-gradient(90deg,#000eff 0px,#3300ff 52px)"></div><div class="r2" style="top:310px;left:173px;width:49px;background:linear-gradient(90deg,#000dff 0px,#3000ff 49px)"></div><div class="r2" style="top:312px;left:173px;width:47px;background:linear-gradient(90deg,#000dff 0px,#2d00ff 47px)"></div><div class="r2" style="top:314px;left:173px;width:45px;background:linear-gradient(90deg,#000cff 0px,#2a00ff 45px)"></div><div class="r2" style="top:316px;left:174px;width:43px;background:linear-gradient(90deg,#000bff 0px,#2900ff 43px)"></div><div class="r2" style="top:318px;left:174px;width:41px;background:linear-gradient(90deg,#000aff 0px,#2600ff 41px)"></div><div class="r2" style="top:320px;left:174px;width:39px;background:linear-gradient(90deg,#000aff 0px,#2400ff 39px)"></div><div class="r2" style="top:322px;left:175px;width:36px;background:linear-gradient(90deg,#0009ff 0px,#2100ff 36px)"></div><div class="r2" style="top:324px;left:175px;width:34px;background:linear-gradient(90deg,#0008ff 0px,#1f00ff 34px)"></div><div class="r2" style="top:326px;left:175px;width:32px;background:linear-gradient(90deg,#0008ff 0px,#1c00ff 32px)"></div><div class="r2" style="top:328px;left:176px;width:29px;background:linear-gradient(90deg,#0007ff 0px,#1a00ff 29px)"></div><div class="r2" style="top:330px;left:176px;width:27px;background:linear-gradient(90deg,#0006ff 0px,#1800ff 27px)"></div><div class="r2" style="top:332px;left:176px;width:25px;background:linear-gradient(90deg,#0006ff 0px,#1500ff 25px)"></div><div class="r2" style="top:334px;left:177px;width:22px;background:linear-gradient(90deg,#0005ff 0px,#1300ff 22px)"></div><div class="r2" style="top:336px;left:177px;width:20px;background:linear-gradient(90deg,#0004ff 0px,#1100ff 20px)"></div><div class="r2" style="top:338px;left:177px;width:18px;background:linear-gradient(90deg,#0004ff 0px,#0f00ff 18px)"></div><div class="r2" style="top:340px;left:177px;width:16px;background:linear-gradient(90deg,#0003ff 0px,#0c00ff 16px)"></div><div class="r2" style="top:342px;left:178px;width:13px;background:linear-gradient(90deg,#0003ff 0px,#0a00ff 13px)"></div><div class="r2" style="top:344px;left:178px;width:11px;background:linear-gradient(90deg,#0002ff 0px,#0800ff 11px)"></div><div class="r2" style="top:346px;left:178px;width:9px;background:linear-gradient(90deg,#0002ff 0px,#0600ff 9px)"></div><div class="r2" style="top:348px;left:179px;width:6px;background:linear-gradient(90deg,#0001ff 0px,#0400ff 6px)"></div><div class="r2" style="top:350px;left:179px;width:4px;background:linear-gradient(90deg,#0000ff 0px,#0200ff 4px)"></div></div></div>
<div style="left:1005px;top:556px;width:1px;height:5px;background:#dcdcdc;"></div>
<div style="left:1057px;top:556px;width:1px;height:5px;background:#dcdcdc;"></div>
<div style="left:1108px;top:556px;width:1px;height:5px;background:#dcdcdc;"></div>
<div style="left:1160px;top:556px;width:1px;height:5px;background:#dcdcdc;"></div>
<div style="left:1211px;top:556px;width:1px;height:5px;background:#dcdcdc;"></div>
<div style="left:1263px;top:556px;width:1px;height:5px;background:#dcdcdc;"></div>
<div style="left:1314px;top:556px;width:1px;height:5px;background:#dcdcdc;"></div>
<div style="left:1366px;top:556px;width:1px;height:5px;background:#dcdcdc;"></div>
<div style="left:1417px;top:556px;width:1px;height:5px;background:#dcdcdc;"></div>
<div style="left:1469px;top:556px;width:1px;height:5px;background:#dcdcdc;"></div>
<div style="left:1520px;top:556px;width:1px;height:5px;background:#dcdcdc;"></div>
<div style="left:1572px;top:556px;width:1px;height:5px;background:#dcdcdc;"></div>
<div style="left:1000px;top:555px;width:5px;height:1px;background:#dcdcdc;"></div>
<div style="left:1000px;top:515px;width:5px;height:1px;background:#dcdcdc;"></div>
<div style="left:1000px;top:475px;width:5px;height:1px;background:#dcdcdc;"></div>
<div style="left:1000px;top:436px;width:5px;height:1px;background:#dcdcdc;"></div>
<div style="left:1000px;top:396px;width:5px;height:1px;background:#dcdcdc;"></div>
<div style="left:1000px;top:357px;width:5px;height:1px;background:#dcdcdc;"></div>
<div style="left:1000px;top:317px;width:5px;height:1px;background:#dcdcdc;"></div>
<div style="left:1000px;top:277px;width:5px;height:1px;background:#dcdcdc;"></div>
<div style="left:1000px;top:238px;width:5px;height:1px;background:#dcdcdc;"></div>
<div style="left:1000px;top:198px;width:5px;height:1px;background:#dcdcdc;"></div>
<div style="left:1000px;top:159px;width:5px;height:1px;background:#dcdcdc;"></div>
<div style="left:1000px;top:119px;width:5px;height:1px;background:#dcdcdc;"></div>
<div style="left:1377.5px;top:524px;width:243.5px;height:26.5px;background:#333;"></div>
<div style="left:984.3px;top:605.3px;width:612.3px;height:37.3px;background:linear-gradient(#2c2c2c,#282828 49%,#171717 50%,#141414);"></div>
<div style="left:984.3px;top:605.3px;width:13.7px;height:37.3px;background:#000;"></div>
<div style="left:984.3px;top:642.6px;width:612.3px;height:35.2px;background:#404040;"></div>
<div style="left:984.3px;top:642.6px;width:13.7px;height:35.2px;background:linear-gradient(#232323,#2e2e2e);"></div>
<div style="left:984.3px;top:677.8px;width:612.3px;height:34.6px;background:#7b7b7b;"></div>
<div style="left:984.3px;top:677.8px;width:13.7px;height:34.6px;background:linear-gradient(#262626,#303030);"></div>
<div style="left:984.3px;top:712.4px;width:612.3px;height:34.6px;background:#404040;"></div>
<div style="left:984.3px;top:712.4px;width:13.7px;height:34.6px;background:linear-gradient(#232323,#2e2e2e);"></div>
<div style="left:984.3px;top:747px;width:612.3px;height:35px;background:#7b7b7b;"></div>
<div style="left:984.3px;top:747px;width:13.7px;height:35px;background:linear-gradient(#262626,#303030);"></div>
<div style="left:984.3px;top:782px;width:612.3px;height:14px;background:#404040;"></div>
<div style="left:984.3px;top:782px;width:13.7px;height:14px;background:linear-gradient(#232323,#2e2e2e);"></div>
<div style="left:1597px;top:642.8px;width:16px;height:153px;background:linear-gradient(90deg,#5e5e5e,#6c6c6c);border-radius:3px;"></div>
<div style="left:1598px;top:643.8px;width:14.2px;height:19.5px;background:linear-gradient(#8e8e8e,#7c7c7c);border-radius:3px;"></div>
<div style="left:1598.6px;top:666.5px;width:12.8px;height:83.5px;background:#3c3c3c;border-radius:6px;"></div>
<div style="left:1598px;top:776px;width:14.2px;height:19px;background:linear-gradient(#8e8e8e,#7c7c7c);border-radius:3px;"></div>
<div style="left:998px;top:796px;width:598.6px;height:21.8px;background:linear-gradient(#5a5a5a,#4e4e4e);border-radius:3px;"></div>
<div style="left:998.5px;top:797px;width:15px;height:19.5px;background:linear-gradient(#8e8e8e,#7c7c7c);border-radius:3px;"></div>
<div style="left:1017px;top:797.6px;width:512.2px;height:18.4px;background:#3a3a3a;border-radius:8px;"></div>
<div style="left:1581.3px;top:797px;width:15px;height:19.5px;background:linear-gradient(#8e8e8e,#7c7c7c);border-radius:3px;"></div>
<div style="left:-5.8px;top:826.5px;width:155.6px;height:80px;background:linear-gradient(#b4b4b4,#9c9c9c 28%,#808080 62%,#4c4c4c);border-radius:5px 5px 0 0;"></div>
<div style="left:1.8px;top:833px;width:141.6px;height:45.2px;background:#c0c0c0;border-radius:4.5px;box-shadow:inset 0 1px 1px rgba(0,0,0,.28);"></div>
<div style="left:152.2px;top:826.5px;width:155.6px;height:80px;background:linear-gradient(#b4b4b4,#9c9c9c 28%,#808080 62%,#4c4c4c);border-radius:5px 5px 0 0;"></div>
<div style="left:157.8px;top:833px;width:143.8px;height:45.2px;background:#c00000;border-radius:4.5px;box-shadow:inset 0 1px 1px rgba(0,0,0,.28);"></div>
<div style="left:310.2px;top:826.5px;width:155.6px;height:80px;background:linear-gradient(#b4b4b4,#9c9c9c 28%,#808080 62%,#4c4c4c);border-radius:5px 5px 0 0;"></div>
<div style="left:315.8px;top:833px;width:143.8px;height:45.2px;background:#00c000;border-radius:4.5px;box-shadow:inset 0 1px 1px rgba(0,0,0,.28);"></div>
<div style="left:468.2px;top:826.5px;width:155.6px;height:80px;background:linear-gradient(#b4b4b4,#9c9c9c 28%,#808080 62%,#4c4c4c);border-radius:5px 5px 0 0;"></div>
<div style="left:473.8px;top:833px;width:143.8px;height:45.2px;background:#0000c0;border-radius:4.5px;box-shadow:inset 0 1px 1px rgba(0,0,0,.28);"></div>
<div style="left:626.2px;top:826.5px;width:155.6px;height:80px;background:linear-gradient(#b4b4b4,#9c9c9c 28%,#808080 62%,#4c4c4c);border-radius:5px 5px 0 0;"></div>
<div style="left:631.8px;top:833px;width:143.8px;height:45.2px;background:#00c0c0;border-radius:4.5px;box-shadow:inset 0 1px 1px rgba(0,0,0,.28);"></div>
<div style="left:784.2px;top:826.5px;width:155.6px;height:80px;background:linear-gradient(#b4b4b4,#9c9c9c 28%,#808080 62%,#4c4c4c);border-radius:5px 5px 0 0;"></div>
<div style="left:789.8px;top:833px;width:143.8px;height:45.2px;background:#c000c0;border-radius:4.5px;box-shadow:inset 0 1px 1px rgba(0,0,0,.28);"></div>
<div style="left:942.2px;top:826.5px;width:155.6px;height:80px;background:linear-gradient(#b4b4b4,#9c9c9c 28%,#808080 62%,#4c4c4c);border-radius:5px 5px 0 0;"></div>
<div style="left:947.8px;top:833px;width:143.8px;height:45.2px;background:#c4c000;border-radius:4.5px;box-shadow:inset 0 1px 1px rgba(0,0,0,.28);"></div>
<div style="left:1100.2px;top:826.5px;width:155.6px;height:80px;background:linear-gradient(#1c1c1c,#262626 12%,#303030 60%,#2e2e2e);border-radius:5px 5px 0 0;"></div>
<div style="left:1105.8px;top:833px;width:143.8px;height:45.2px;background:#ffffff;border-radius:4.5px;box-shadow:inset 0 1px 1px rgba(0,0,0,.28);"></div>
<div style="left:1259.2px;top:826.5px;width:60px;height:23px;background:linear-gradient(#a8a8a8,#8a8a8a);border-radius:5px 5px 0 0;"></div>
<div style="left:1279.5px;top:828.3px;width:20px;height:20px;background:linear-gradient(#8c8c8c,#a8a8a8);border-radius:50%;"></div>
<div style="left:1259.2px;top:850px;width:60px;height:56px;background:linear-gradient(#909090,#7a7a7a 50%,#505050);"></div>
<div style="left:1269.5px;top:857.3px;width:38.8px;height:37.8px;background:linear-gradient(#b0b0b0,#a4a4a4 50%,#7e7e7e 52%,#8a8a8a);border:2.6px solid #262626;border-radius:5px;box-sizing:border-box;"></div>
<div style="left:1280.8px;top:868.2px;width:17.5px;height:17.2px;background:linear-gradient(#1a1a1a,#141414 50%,#000 52%,#000);"></div>
<div style="left:1320.6px;top:826.5px;width:57.4px;height:37.5px;background:linear-gradient(#bcbcbc,#9e9e9e 45%,#7a7a7a);border-radius:4px 0 0 0;"></div>
<div style="left:1337.1px;top:832.5px;width:25px;height:25px;background:linear-gradient(#8a8a8a,#a6a6a6);border-radius:50%;"></div>
<div style="left:1378.9px;top:826.5px;width:55.3px;height:37.5px;background:linear-gradient(#bcbcbc,#9e9e9e 45%,#7a7a7a);border-radius:0;"></div>
<div style="left:1394.35px;top:832.5px;width:25px;height:25px;background:linear-gradient(#8a8a8a,#a6a6a6);border-radius:50%;"></div>
<div style="left:1435.1px;top:826.5px;width:55.2px;height:37.5px;background:linear-gradient(#bcbcbc,#9e9e9e 45%,#7a7a7a);border-radius:0;"></div>
<div style="left:1450.5px;top:832.5px;width:25px;height:25px;background:linear-gradient(#8a8a8a,#a6a6a6);border-radius:50%;"></div>
<div style="left:1492.2px;top:826.5px;width:54.8px;height:37.5px;background:linear-gradient(#bcbcbc,#9e9e9e 45%,#7a7a7a);border-radius:0;"></div>
<div style="left:1507.1px;top:832.5px;width:25px;height:25px;background:linear-gradient(#8a8a8a,#a6a6a6);border-radius:50%;"></div>
<div style="left:1547.9px;top:826.5px;width:54.9px;height:37.5px;background:linear-gradient(#bcbcbc,#9e9e9e 45%,#7a7a7a);border-radius:0;"></div>
<div style="left:1562.85px;top:832.5px;width:25px;height:25px;background:linear-gradient(#8a8a8a,#a6a6a6);border-radius:50%;"></div>
<div style="left:1320.6px;top:865.5px;width:169.7px;height:41px;background:linear-gradient(#c2c2c2,#9c9c9c 45%,#6c6c6c);border-radius:4px 0 0 0;"></div>
<div style="left:1492.2px;top:865.5px;width:165px;height:41px;background:linear-gradient(#c2c2c2,#9c9c9c 45%,#6c6c6c);"></div>
<div style="left:1346.8px;top:871.8px;width:24.5px;height:24.5px;background:linear-gradient(#8c8c8c,#aaaaaa);border-radius:50%;"></div>
<div style="left:1613.2px;top:871.8px;width:24.5px;height:24.5px;background:linear-gradient(#8c8c8c,#aaaaaa);border-radius:50%;"></div>
<svg class="ov" width="1653" height="903" viewBox="0 0 1653 903">
<line x1="82.2" y1="20" x2="88.8" y2="20" stroke="#8c8c8c" stroke-width="1.1"/>
<line x1="85.5" y1="16.7" x2="85.5" y2="23.3" stroke="#8c8c8c" stroke-width="1.1"/>
<text x="1.3" y="23" font-size="14.4" fill="#e6e6e6" textLength="57.5" lengthAdjust="spacingAndGlyphs">History 1</text>
<path d="M1151.3 14.9h12.6l-6.3 6.4z" fill="#fff"/>
<circle cx="1207.2" cy="16.5" r="15.7" fill="#0000ee" stroke="#e8e8ff" stroke-width="1.2"/>
<text x="1207.3" y="21" font-size="11.2" fill="#fff" text-anchor="middle" textLength="18.6" lengthAdjust="spacingAndGlyphs" stroke="#fff" stroke-width="0.3">657</text>
<text x="1059" y="11.6" font-size="12.6" fill="#e8e8e8" textLength="81.6" lengthAdjust="spacingAndGlyphs">X-Rite i1Pro 3</text>
<text x="1059.2" y="30.6" font-size="12.6" fill="#e8e8e8" textLength="69.2" lengthAdjust="spacingAndGlyphs">Direct View</text>
<path d="M1370.3 14.9h12.6l-6.3 6.4z" fill="#fff"/>
<text x="1245.3" y="11.6" font-size="12.6" fill="#e8e8e8" textLength="79.5" lengthAdjust="spacingAndGlyphs">Mobile Forge</text>
<path d="M1556.9 14.9h12.6l-6.3 6.4z" fill="#fff"/>
<text x="1415.6" y="11.6" font-size="12.6" fill="#e8e8e8" textLength="131" lengthAdjust="spacingAndGlyphs">Direct Display Control</text>
<path d="M1613.99 13.51L1616.21 13.86L1616.21 16.34L1613.99 16.69L1613.36 18.21L1614.68 20.03L1612.93 21.78L1611.11 20.46L1609.59 21.09L1609.24 23.31L1606.76 23.31L1606.41 21.09L1604.89 20.46L1603.07 21.78L1601.32 20.03L1602.64 18.21L1602.01 16.69L1599.79 16.34L1599.79 13.86L1602.01 13.51L1602.64 11.99L1601.32 10.17L1603.07 8.42L1604.89 9.74L1606.41 9.11L1606.76 6.89L1609.24 6.89L1609.59 9.11L1611.11 9.74L1612.93 8.42L1614.68 10.17L1613.36 11.99ZM1603.7 15.1a4.3 4.3 0 1 0 8.6 0a4.3 4.3 0 1 0 -8.6 0Z" fill="#dadada" fill-rule="evenodd" stroke="#dadada" stroke-width="0.5" stroke-linejoin="round"/>
<path d="M1643 14.6l7.2-6v12z" fill="#fff"/>
<text x="43.8" y="92.2" font-size="37" fill="#ffffff" textLength="216.3" lengthAdjust="spacingAndGlyphs" stroke="#fff" stroke-width="0.35">Color Gamut</text>
<text x="203" y="141.2" font-size="14.4" fill="#d2d2d2" text-anchor="middle" textLength="77" lengthAdjust="spacingAndGlyphs">DeltaE 2000</text>
<text x="83.2" y="567" font-size="14.4" fill="#d2d2d2" text-anchor="middle">2</text>
<text x="127.2" y="567" font-size="14.4" fill="#d2d2d2" text-anchor="middle">4</text>
<text x="170.2" y="567" font-size="14.4" fill="#d2d2d2" text-anchor="middle">6</text>
<text x="214.2" y="567" font-size="14.4" fill="#d2d2d2" text-anchor="middle">8</text>
<text x="257.2" y="567" font-size="14.4" fill="#d2d2d2" text-anchor="middle">10</text>
<text x="300.2" y="567" font-size="14.4" fill="#d2d2d2" text-anchor="middle">12</text>
<text x="343.2" y="567" font-size="14.4" fill="#d2d2d2" text-anchor="middle">14</text>
<text x="40.2" y="567" font-size="14.4" fill="#d2d2d2" text-anchor="middle">0</text>
<text x="472.8" y="74.8" font-size="14.4" fill="#d2d2d2" text-anchor="middle" textLength="40.5" lengthAdjust="spacingAndGlyphs">DeltaL</text>
<text x="410" y="87" font-size="14.4" fill="#d2d2d2" text-anchor="end">15</text>
<text x="410" y="138.05" font-size="14.4" fill="#d2d2d2" text-anchor="end">10</text>
<text x="410" y="189.1" font-size="14.4" fill="#d2d2d2" text-anchor="end">5</text>
<text x="410" y="240.15" font-size="14.4" fill="#d2d2d2" text-anchor="end">0</text>
<text x="410" y="291.2" font-size="14.4" fill="#d2d2d2" text-anchor="end">-5</text>
<text x="410" y="342.25" font-size="14.4" fill="#d2d2d2" text-anchor="end">-10</text>
<text x="410" y="393.3" font-size="14.4" fill="#d2d2d2" text-anchor="end">-15</text>
<text x="485.5" y="402" font-size="14.4" fill="#d2d2d2" text-anchor="middle" textLength="37.5" lengthAdjust="spacingAndGlyphs">100W</text>
<text x="663.8" y="74.8" font-size="14.4" fill="#d2d2d2" text-anchor="middle" textLength="42.5" lengthAdjust="spacingAndGlyphs">DeltaC</text>
<text x="601" y="87" font-size="14.4" fill="#d2d2d2" text-anchor="end">15</text>
<text x="601" y="138.05" font-size="14.4" fill="#d2d2d2" text-anchor="end">10</text>
<text x="601" y="189.1" font-size="14.4" fill="#d2d2d2" text-anchor="end">5</text>
<text x="601" y="240.15" font-size="14.4" fill="#d2d2d2" text-anchor="end">0</text>
<text x="601" y="291.2" font-size="14.4" fill="#d2d2d2" text-anchor="end">-5</text>
<text x="601" y="342.25" font-size="14.4" fill="#d2d2d2" text-anchor="end">-10</text>
<text x="601" y="393.3" font-size="14.4" fill="#d2d2d2" text-anchor="end">-15</text>
<text x="676.5" y="402" font-size="14.4" fill="#d2d2d2" text-anchor="middle" textLength="37.5" lengthAdjust="spacingAndGlyphs">100W</text>
<text x="854.8" y="74.8" font-size="14.4" fill="#d2d2d2" text-anchor="middle" textLength="43" lengthAdjust="spacingAndGlyphs">DeltaH</text>
<text x="792" y="87" font-size="14.4" fill="#d2d2d2" text-anchor="end">15</text>
<text x="792" y="138.05" font-size="14.4" fill="#d2d2d2" text-anchor="end">10</text>
<text x="792" y="189.1" font-size="14.4" fill="#d2d2d2" text-anchor="end">5</text>
<text x="792" y="240.15" font-size="14.4" fill="#d2d2d2" text-anchor="end">0</text>
<text x="792" y="291.2" font-size="14.4" fill="#d2d2d2" text-anchor="end">-5</text>
<text x="792" y="342.25" font-size="14.4" fill="#d2d2d2" text-anchor="end">-10</text>
<text x="792" y="393.3" font-size="14.4" fill="#d2d2d2" text-anchor="end">-15</text>
<text x="867.5" y="402" font-size="14.4" fill="#d2d2d2" text-anchor="middle" textLength="37.5" lengthAdjust="spacingAndGlyphs">100W</text>
<text x="430.6" y="567.8" font-size="11.6" fill="#fff" text-anchor="middle" textLength="32" lengthAdjust="spacingAndGlyphs" font-weight="bold">White</text>
<text x="500.6" y="567.8" font-size="11.6" fill="#fff" text-anchor="middle" textLength="19.5" lengthAdjust="spacingAndGlyphs" font-weight="bold">Red</text>
<text x="570.6" y="567.8" font-size="11.6" fill="#fff" text-anchor="middle" textLength="32" lengthAdjust="spacingAndGlyphs" font-weight="bold">Green</text>
<text x="639.6" y="567.8" font-size="11.6" fill="#fff" text-anchor="middle" textLength="23" lengthAdjust="spacingAndGlyphs" font-weight="bold">Blue</text>
<text x="709.9" y="567.8" font-size="11.6" fill="#fff" text-anchor="middle" textLength="25.5" lengthAdjust="spacingAndGlyphs" font-weight="bold">Cyan</text>
<text x="779.8" y="567.8" font-size="11.6" fill="#fff" text-anchor="middle" textLength="47" lengthAdjust="spacingAndGlyphs" font-weight="bold">Magenta</text>
<text x="849.6" y="567.8" font-size="11.6" fill="#fff" text-anchor="middle" textLength="34.5" lengthAdjust="spacingAndGlyphs" font-weight="bold">Yellow</text>
<text x="919.6" y="567.8" font-size="11.6" fill="#fff" text-anchor="middle" textLength="31" lengthAdjust="spacingAndGlyphs" font-weight="bold">100W</text>
<text transform="translate(395.7,470.3) rotate(-90)" font-size="11.3" fill="#fff" font-weight="bold" textLength="34" lengthAdjust="spacingAndGlyphs">Actual</text>
<text transform="translate(395.7,541.8) rotate(-90)" font-size="11.3" fill="#fff" font-weight="bold" textLength="33.3" lengthAdjust="spacingAndGlyphs">Target</text>
<text x="35.3" y="652.8" font-size="27.8" fill="#fff" textLength="211.3" lengthAdjust="spacingAndGlyphs" stroke="#fff" stroke-width="0.2">Current Reading</text>
<text x="35.3" y="721" font-size="24.4" fill="#fff" textLength="99" lengthAdjust="spacingAndGlyphs">x: 0,3059</text>
<text x="186.7" y="721" font-size="24.4" fill="#fff" textLength="100" lengthAdjust="spacingAndGlyphs">y: 0,3266</text>
<text x="35.3" y="760.6" font-size="24.4" fill="#fff" textLength="107" lengthAdjust="spacingAndGlyphs">fL: 140,68</text>
<text x="35.3" y="799.8" font-size="24.4" fill="#fff" textLength="119.5" lengthAdjust="spacingAndGlyphs">cd/m²: 482</text>
<text x="472.3" y="621.8" font-size="14.4" fill="#d2d2d2" text-anchor="middle" textLength="80.5" lengthAdjust="spacingAndGlyphs">RGB Balance</text>
<text x="349" y="666.1" font-size="14.4" fill="#d2d2d2" text-anchor="end">5</text>
<text x="349" y="720.1" font-size="14.4" fill="#d2d2d2" text-anchor="end">0</text>
<text x="349" y="776.1" font-size="14.4" fill="#d2d2d2" text-anchor="end">-5</text>
<text x="481" y="816.8" font-size="14.4" fill="#d2d2d2" text-anchor="middle" textLength="37.5" lengthAdjust="spacingAndGlyphs">100W</text>
<text x="802" y="613.6" font-size="14.4" fill="#d2d2d2" text-anchor="middle" textLength="73" lengthAdjust="spacingAndGlyphs">CIE 1931 xy</text>
<rect x="636.5" y="618.5" width="330" height="192" fill="none" stroke="#b4b4b4" stroke-width="1"/>
<rect x="794" y="706.7" width="14" height="14" fill="#fff" stroke="#000" stroke-width="2"/>
<circle cx="755.6" cy="722.4" r="4.2" fill="#fff" stroke="#000" stroke-width="1"/>
<circle cx="734.6" cy="735.7" r="4.2" fill="#b4b4b4" stroke="#000" stroke-width="1"/>
<text x="1298.5" y="73" font-size="14.4" fill="#d2d2d2" text-anchor="middle" textLength="82" lengthAdjust="spacingAndGlyphs">CIE 1976 u&#x27;v&#x27;</text>
<rect x="1005.5" y="78.5" width="619" height="477" fill="none" stroke="#b0b0b0" stroke-width="1"/>
<text x="1005.6" y="576.4" font-size="14.4" fill="#d2d2d2" text-anchor="middle">0</text>
<text x="1057.1" y="576.4" font-size="14.4" fill="#d2d2d2" text-anchor="middle" textLength="26.6" lengthAdjust="spacingAndGlyphs">0,05</text>
<text x="1108.6" y="576.4" font-size="14.4" fill="#d2d2d2" text-anchor="middle" textLength="17.6" lengthAdjust="spacingAndGlyphs">0,1</text>
<text x="1160.1" y="576.4" font-size="14.4" fill="#d2d2d2" text-anchor="middle" textLength="26.6" lengthAdjust="spacingAndGlyphs">0,15</text>
<text x="1211.6" y="576.4" font-size="14.4" fill="#d2d2d2" text-anchor="middle" textLength="17.6" lengthAdjust="spacingAndGlyphs">0,2</text>
<text x="1263.1" y="576.4" font-size="14.4" fill="#d2d2d2" text-anchor="middle" textLength="26.6" lengthAdjust="spacingAndGlyphs">0,25</text>
<text x="1314.6" y="576.4" font-size="14.4" fill="#d2d2d2" text-anchor="middle" textLength="17.6" lengthAdjust="spacingAndGlyphs">0,3</text>
<text x="1366.1" y="576.4" font-size="14.4" fill="#d2d2d2" text-anchor="middle" textLength="26.6" lengthAdjust="spacingAndGlyphs">0,35</text>
<text x="1417.6" y="576.4" font-size="14.4" fill="#d2d2d2" text-anchor="middle" textLength="17.6" lengthAdjust="spacingAndGlyphs">0,4</text>
<text x="1469.1" y="576.4" font-size="14.4" fill="#d2d2d2" text-anchor="middle" textLength="26.6" lengthAdjust="spacingAndGlyphs">0,45</text>
<text x="1520.6" y="576.4" font-size="14.4" fill="#d2d2d2" text-anchor="middle" textLength="17.6" lengthAdjust="spacingAndGlyphs">0,5</text>
<text x="1572.1" y="576.4" font-size="14.4" fill="#d2d2d2" text-anchor="middle" textLength="26.6" lengthAdjust="spacingAndGlyphs">0,55</text>
<text x="999.8" y="561.6" font-size="14.4" fill="#d2d2d2" text-anchor="end">0</text>
<text x="999.8" y="521.98" font-size="14.4" fill="#d2d2d2" text-anchor="end">0,05</text>
<text x="999.8" y="482.36" font-size="14.4" fill="#d2d2d2" text-anchor="end">0,1</text>
<text x="999.8" y="442.74" font-size="14.4" fill="#d2d2d2" text-anchor="end">0,15</text>
<text x="999.8" y="403.12" font-size="14.4" fill="#d2d2d2" text-anchor="end">0,2</text>
<text x="999.8" y="363.5" font-size="14.4" fill="#d2d2d2" text-anchor="end">0,25</text>
<text x="999.8" y="323.88" font-size="14.4" fill="#d2d2d2" text-anchor="end">0,3</text>
<text x="999.8" y="284.26" font-size="14.4" fill="#d2d2d2" text-anchor="end">0,35</text>
<text x="999.8" y="244.64" font-size="14.4" fill="#d2d2d2" text-anchor="end">0,4</text>
<text x="999.8" y="205.02" font-size="14.4" fill="#d2d2d2" text-anchor="end">0,45</text>
<text x="999.8" y="165.4" font-size="14.4" fill="#d2d2d2" text-anchor="end">0,5</text>
<text x="999.8" y="125.78" font-size="14.4" fill="#d2d2d2" text-anchor="end">0,55</text>
<text x="1378.3" y="543.6" font-size="18.6" fill="#fff" textLength="214" lengthAdjust="spacingAndGlyphs">Gamut Coverage:  94,1%</text>
<rect x="1127.35" y="101.35" width="13.5" height="13.5" fill="none" stroke="#fafafa" stroke-width="1.3"/>
<rect x="1208.85" y="108.65" width="13.5" height="13.5" fill="none" stroke="#fafafa" stroke-width="1.3"/>
<rect x="1462.95" y="132.85" width="13.5" height="13.5" fill="none" stroke="#fafafa" stroke-width="1.3"/>
<rect x="1141.75" y="186.85" width="13.5" height="13.5" fill="none" stroke="#fafafa" stroke-width="1.3"/>
<rect x="1312.85" y="285.25" width="13.5" height="13.5" fill="none" stroke="#fafafa" stroke-width="1.3"/>
<rect x="1179.75" y="422.15" width="13.5" height="13.5" fill="none" stroke="#fafafa" stroke-width="1.3"/>
<circle cx="1140.6" cy="106.4" r="4.2" fill="#009c00" stroke="#0a1a0a" stroke-width="1"/>
<circle cx="1196.9" cy="111.5" r="4.2" fill="#c4b41c" stroke="#1a1a0a" stroke-width="1"/>
<circle cx="1462.8" cy="138" r="4.2" fill="#a80000" stroke="#200000" stroke-width="1"/>
<circle cx="1157.5" cy="199.8" r="4.2" fill="#20b0b8" stroke="#0a2020" stroke-width="1"/>
<circle cx="1310.5" cy="318.7" r="4.2" fill="#a000a0" stroke="#200020" stroke-width="1"/>
<circle cx="1202.6" cy="443.2" r="4.2" fill="#0606d2" stroke="#000030" stroke-width="1"/>
<rect x="1203.3" y="177" width="11.6" height="11.6" fill="none" stroke="#000" stroke-width="2"/>
<circle cx="1204.2" cy="186.3" r="4.2" fill="none" stroke="#222" stroke-width="1"/>
<circle cx="1204.3" cy="184.6" r="4.2" fill="#fff" stroke="#000" stroke-width="1"/>
<svg x="984.3" y="605.3" width="612.3" height="190.7" viewBox="984.3 605.3 612.3 190.7">
<text x="1072.4" y="630.8" font-size="19" fill="#fff" textLength="40.6" lengthAdjust="spacingAndGlyphs">White</text>
<text x="1148.9" y="630.8" font-size="19" fill="#fff" textLength="25.3" lengthAdjust="spacingAndGlyphs">Red</text>
<text x="1216.6" y="630.8" font-size="19" fill="#fff" textLength="41" lengthAdjust="spacingAndGlyphs">Green</text>
<text x="1293.1" y="630.8" font-size="19" fill="#fff" textLength="30" lengthAdjust="spacingAndGlyphs">Blue</text>
<text x="1360.4" y="630.8" font-size="19" fill="#fff" textLength="32.5" lengthAdjust="spacingAndGlyphs">Cyan</text>
<text x="1437.2" y="630.8" font-size="19" fill="#fff" textLength="60" lengthAdjust="spacingAndGlyphs">Magenta</text>
<text x="1506.2" y="630.8" font-size="19" fill="#fff" textLength="43.5" lengthAdjust="spacingAndGlyphs">Yellow</text>
<text x="1582.5" y="630.8" font-size="19" fill="#fff" textLength="40" lengthAdjust="spacingAndGlyphs">100W</text>
<text x="1002.3" y="667.8" font-size="22.6" fill="#fff" textLength="56" lengthAdjust="spacingAndGlyphs">x: CIE31</text>
<text x="1072.1" y="667.8" font-size="22.6" fill="#fff" textLength="49.08" lengthAdjust="spacingAndGlyphs">0,3026</text>
<text x="1148.6" y="667.8" font-size="22.6" fill="#fff" textLength="49.08" lengthAdjust="spacingAndGlyphs">0,6373</text>
<text x="1216.3" y="667.8" font-size="22.6" fill="#fff" textLength="49.08" lengthAdjust="spacingAndGlyphs">0,3143</text>
<text x="1292.8" y="667.8" font-size="22.6" fill="#fff" textLength="49.08" lengthAdjust="spacingAndGlyphs">0,1578</text>
<text x="1360.1" y="667.8" font-size="22.6" fill="#fff" textLength="49.08" lengthAdjust="spacingAndGlyphs">0,2309</text>
<text x="1436.9" y="667.8" font-size="22.6" fill="#fff" textLength="49.08" lengthAdjust="spacingAndGlyphs">0,2947</text>
<text x="1505.9" y="667.8" font-size="22.6" fill="#fff" textLength="49.08" lengthAdjust="spacingAndGlyphs">0,4002</text>
<text x="1582.2" y="667.8" font-size="22.6" fill="#fff" textLength="49.08" lengthAdjust="spacingAndGlyphs">0,3059</text>
<text x="1002.3" y="702.6" font-size="22.6" fill="#ececec" textLength="56.5" lengthAdjust="spacingAndGlyphs">y: CIE31</text>
<text x="1072.1" y="702.6" font-size="22.6" fill="#ececec" textLength="49.08" lengthAdjust="spacingAndGlyphs">0,3233</text>
<text x="1148.6" y="702.6" font-size="22.6" fill="#ececec" textLength="49.08" lengthAdjust="spacingAndGlyphs">0,3343</text>
<text x="1216.3" y="702.6" font-size="22.6" fill="#ececec" textLength="49.08" lengthAdjust="spacingAndGlyphs">0,6030</text>
<text x="1292.8" y="702.6" font-size="22.6" fill="#ececec" textLength="49.08" lengthAdjust="spacingAndGlyphs">0,0514</text>
<text x="1360.1" y="702.6" font-size="22.6" fill="#ececec" textLength="49.08" lengthAdjust="spacingAndGlyphs">0,3100</text>
<text x="1436.9" y="702.6" font-size="22.6" fill="#ececec" textLength="49.08" lengthAdjust="spacingAndGlyphs">0,1314</text>
<text x="1505.9" y="702.6" font-size="22.6" fill="#ececec" textLength="49.08" lengthAdjust="spacingAndGlyphs">0,5333</text>
<text x="1582.2" y="702.6" font-size="22.6" fill="#ececec" textLength="49.08" lengthAdjust="spacingAndGlyphs">0,3266</text>
<text x="1002.3" y="737.4" font-size="22.6" fill="#fff" textLength="8" lengthAdjust="spacingAndGlyphs">Y</text>
<text x="1072.1" y="737.4" font-size="22.6" fill="#fff" textLength="66.93" lengthAdjust="spacingAndGlyphs">251,4040</text>
<text x="1148.6" y="737.4" font-size="22.6" fill="#fff" textLength="58" lengthAdjust="spacingAndGlyphs">46,1723</text>
<text x="1216.3" y="737.4" font-size="22.6" fill="#fff" textLength="66.93" lengthAdjust="spacingAndGlyphs">196,7871</text>
<text x="1292.8" y="737.4" font-size="22.6" fill="#fff" textLength="58" lengthAdjust="spacingAndGlyphs">17,3903</text>
<text x="1360.1" y="737.4" font-size="22.6" fill="#fff" textLength="66.93" lengthAdjust="spacingAndGlyphs">206,2949</text>
<text x="1436.9" y="737.4" font-size="22.6" fill="#fff" textLength="58" lengthAdjust="spacingAndGlyphs">60,7473</text>
<text x="1505.9" y="737.4" font-size="22.6" fill="#fff" textLength="66.93" lengthAdjust="spacingAndGlyphs">241,5995</text>
<text x="1582.2" y="737.4" font-size="22.6" fill="#fff" textLength="26.77" lengthAdjust="spacingAndGlyphs">482</text>
<text x="1002.3" y="772.2" font-size="22.6" fill="#ececec" textLength="58" lengthAdjust="spacingAndGlyphs">Target Y</text>
<text x="1072.1" y="772.2" font-size="22.6" fill="#ececec" textLength="66.93" lengthAdjust="spacingAndGlyphs">251,4040</text>
<text x="1148.6" y="772.2" font-size="22.6" fill="#ececec" textLength="58" lengthAdjust="spacingAndGlyphs">53,4626</text>
<text x="1216.3" y="772.2" font-size="22.6" fill="#ececec" textLength="66.93" lengthAdjust="spacingAndGlyphs">179,7937</text>
<text x="1292.8" y="772.2" font-size="22.6" fill="#ececec" textLength="58" lengthAdjust="spacingAndGlyphs">18,1477</text>
<text x="1360.1" y="772.2" font-size="22.6" fill="#ececec" textLength="66.93" lengthAdjust="spacingAndGlyphs">197,9414</text>
<text x="1436.9" y="772.2" font-size="22.6" fill="#ececec" textLength="58" lengthAdjust="spacingAndGlyphs">71,6103</text>
<text x="1505.9" y="772.2" font-size="22.6" fill="#ececec" textLength="66.93" lengthAdjust="spacingAndGlyphs">233,2562</text>
<text x="1582.2" y="772.2" font-size="22.6" fill="#ececec" textLength="26.77" lengthAdjust="spacingAndGlyphs">482</text>
<text x="1002.3" y="807" font-size="22.6" fill="#fff" textLength="60" lengthAdjust="spacingAndGlyphs">ΔE 2000</text>
<text x="1072.1" y="807" font-size="22.6" fill="#fff" textLength="49.08" lengthAdjust="spacingAndGlyphs">4,1041</text>
<text x="1148.6" y="807" font-size="22.6" fill="#fff" textLength="49.08" lengthAdjust="spacingAndGlyphs">2,6633</text>
<text x="1216.3" y="807" font-size="22.6" fill="#fff" textLength="49.08" lengthAdjust="spacingAndGlyphs">3,0188</text>
<text x="1292.8" y="807" font-size="22.6" fill="#fff" textLength="49.08" lengthAdjust="spacingAndGlyphs">4,0363</text>
<text x="1360.1" y="807" font-size="22.6" fill="#fff" textLength="49.08" lengthAdjust="spacingAndGlyphs">5,7557</text>
<text x="1436.9" y="807" font-size="22.6" fill="#fff" textLength="49.08" lengthAdjust="spacingAndGlyphs">4,1561</text>
<text x="1505.9" y="807" font-size="22.6" fill="#fff" textLength="49.08" lengthAdjust="spacingAndGlyphs">5,6301</text>
<text x="1582.2" y="807" font-size="22.6" fill="#fff" textLength="31.23" lengthAdjust="spacingAndGlyphs">3,94</text>
</svg>
<path d="M1600.7 656.5h9l-4.5-6.3z" fill="#2c2c2c"/>
<path d="M1600.7 782.5h9l-4.5 6.3z" fill="#2c2c2c"/>
<path d="M1009.5 802v9.6l-6-4.8z" fill="#2c2c2c"/>
<path d="M1585.5 802v9.6l6-4.8z" fill="#2c2c2c"/>
<text x="71.8" y="896.9" font-size="13.2" fill="#2a2a2a" text-anchor="middle" textLength="37.3" lengthAdjust="spacingAndGlyphs" font-weight="bold">White</text>
<text x="229.7" y="896.9" font-size="13.2" fill="#2a2a2a" text-anchor="middle" textLength="23" lengthAdjust="spacingAndGlyphs" font-weight="bold">Red</text>
<text x="387.7" y="896.9" font-size="13.2" fill="#2a2a2a" text-anchor="middle" textLength="38" lengthAdjust="spacingAndGlyphs" font-weight="bold">Green</text>
<text x="545.7" y="896.9" font-size="13.2" fill="#2a2a2a" text-anchor="middle" textLength="26.5" lengthAdjust="spacingAndGlyphs" font-weight="bold">Blue</text>
<text x="703.7" y="896.9" font-size="13.2" fill="#2a2a2a" text-anchor="middle" textLength="29.5" lengthAdjust="spacingAndGlyphs" font-weight="bold">Cyan</text>
<text x="861.7" y="896.9" font-size="13.2" fill="#2a2a2a" text-anchor="middle" textLength="54.5" lengthAdjust="spacingAndGlyphs" font-weight="bold">Magenta</text>
<text x="1019.7" y="896.9" font-size="13.2" fill="#2a2a2a" text-anchor="middle" textLength="41" lengthAdjust="spacingAndGlyphs" font-weight="bold">Yellow</text>
<text x="1177.7" y="896.9" font-size="13.2" fill="#fff" text-anchor="middle" textLength="37" lengthAdjust="spacingAndGlyphs" font-weight="bold">100W</text>
<path d="M1284.2 840h10.6l-5.3-6z" fill="#2e2e2e"/>
<rect x="1345" y="840.2" width="9.4" height="9.4" fill="#3a3a3a" rx="1"/>
<path d="M1403.25 839.5v11.4l9.6-5.7z" fill="#3a3a3a"/>
<path d="M1459.6 839.4h-2.6v11.2h2.6M1466.4 839.4h2.6v11.2h-2.6" fill="none" stroke="#3a3a3a" stroke-width="1.7"/>
<path d="M1460.8 845h4.4M1461.8 843.3l-1.8 1.7 1.8 1.7M1464.2 843.3l1.8 1.7-1.8 1.7" fill="none" stroke="#3a3a3a" stroke-width="1.2"/>
<path d="M1519.6 845c-1.6-2.4-3-3.4-4.8-3.4a3.4 3.4 0 0 0 0 6.8c1.8 0 3.2-1 4.8-3.4c1.6-2.4 3-3.4 4.8-3.4a3.4 3.4 0 0 1 0 6.8c-1.8 0-3.2-1-4.8-3.400z" fill="none" stroke="#3a3a3a" stroke-width="1.7"/>
<path d="M1569.75 843.6a6 6 0 0 1 10.6-2.2M1580.95 846.4a6 6 0 0 1-10.6 2.2" fill="none" stroke="#3a3a3a" stroke-width="2.2"/>
<path d="M1581.75 838v5.4h-5.4zM1568.95 852v-5.4h5.400z" fill="#3a3a3a"/>
<path d="M1358.5 879.2l-4.3 4.8 4.300 4.8M1364.300 879.2l-4.3 4.8 4.300 4.8" fill="none" stroke="#3c3c3c" stroke-width="1.7"/>
<path d="M1620.4 879.2l4.3 4.8-4.3 4.800M1626.2 879.2l4.3 4.8-4.3 4.800" fill="none" stroke="#3c3c3c" stroke-width="1.7"/>
<text x="1392.6" y="894.3" font-size="29.5" fill="#343434" textLength="63.5" lengthAdjust="spacingAndGlyphs" stroke="#343434" stroke-width="0.9" style="filter:drop-shadow(0 0 0.8px rgba(50,50,50,.8))">Back</text>
<text x="1525.4" y="894.3" font-size="29.5" fill="#343434" textLength="65" lengthAdjust="spacingAndGlyphs" stroke="#343434" stroke-width="0.9" style="filter:drop-shadow(0 0 0.8px rgba(50,50,50,.8))">Next</text>
<text x="1614.3" y="878.8" font-size="69.3" font-family="DejaVu Sans,sans-serif" font-weight="bold" fill="#e40808" stroke="#e40808" stroke-width="2.4" stroke-linejoin="round" textLength="32.1" lengthAdjust="spacingAndGlyphs" style="filter:drop-shadow(0.5px 1px 1px rgba(0,0,0,.55))">*</text>
</svg>
</div></body></html>
